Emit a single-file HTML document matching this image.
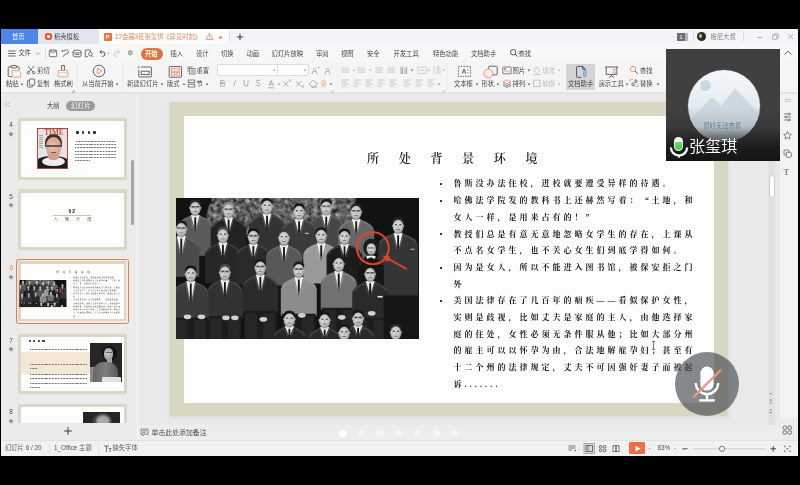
<!DOCTYPE html>
<html lang="zh-CN">
<head>
<meta charset="utf-8">
<title>WPS 演示</title>
<style>
*{box-sizing:border-box;margin:0;padding:0}
html,body{width:800px;height:485px;overflow:hidden;background:#000}
body{font-family:"Liberation Sans","Noto Sans CJK SC",sans-serif;font-size:7px;color:#3c3c3c;position:relative}
.a{position:absolute}
.t{position:absolute;white-space:nowrap;line-height:10px;height:10px;font-size:6.3px;color:#333;font-weight:350}
#win{left:1px;top:28.6px;width:797px;height:427.6px;background:#ececec;overflow:hidden}
/* coordinates inside #win are screen coords minus (1,29); use wrapper shifting */
#w{position:absolute;left:-1px;top:-28.6px;width:800px;height:485px;filter:blur(0.35px);will-change:transform}
.kai{font-family:"Liberation Serif","Noto Serif CJK SC",serif;font-weight:700;color:#1c1c1c}
.bl{position:absolute;left:269px;white-space:nowrap;font-size:8px;letter-spacing:3px;line-height:12px;height:12px;font-weight:700;color:#1a1a1a}
.q{display:inline-block;width:11px;letter-spacing:0}
.dot{position:absolute;left:255.7px;width:2.2px;height:2.2px;border-radius:0.4px;background:#1a1a1a}
.pd{position:absolute;top:429.5px;width:7.5px;height:7.5px;border-radius:50%;background:#f5f5f5}
</style>
</head>
<body>
<div id="win" class="a"><div id="w">

<!-- ===== tab bar ===== -->
<div class="a" style="left:1px;top:29px;width:797px;height:15px;background:#f3f4f7"></div>
<div class="a" style="left:1px;top:29px;width:37px;height:15px;background:#4d86ea"></div>
<div class="t" style="left:12px;top:31.5px;color:#fff">首页</div>
<div class="a" style="left:38px;top:29px;width:61px;height:15px;background:#e2e6ee"></div>
<div class="a" style="left:44.5px;top:32.5px;width:7.5px;height:7.5px;border-radius:2px;background:#ee5a2c"></div>
<div class="a" style="left:46.5px;top:34.5px;width:3.5px;height:3.5px;border-radius:50%;background:#fff"></div>
<div class="t" style="left:54px;top:31.5px;color:#333">稻壳模板</div>
<div class="a" style="left:99px;top:29px;width:131px;height:15px;background:#fcfcfd"></div>
<div class="a" style="left:104px;top:32.5px;width:8px;height:8px;border-radius:1px;background:#ee7337"></div>
<div class="t" style="left:105.5px;top:31.5px;color:#fff;font-size:6px;font-weight:700">P</div>
<div class="t" style="left:115px;top:31.5px;color:#e38450">17会展3班张玺琪《异见时刻》</div>
<svg class="a" style="left:205px;top:32px" width="9" height="9" viewBox="0 0 9 9"><path d="M4.5 1.2 L8 7.6 L1 7.6 Z" fill="none" stroke="#dc7a78" stroke-width="0.75"/><path d="M4.5 3.6 V5.6 M4.5 6.2 V6.9" stroke="#dc7a78" stroke-width="0.7"/></svg>
<div class="a" style="left:219px;top:35.5px;width:3px;height:3px;border-radius:50%;background:#f08a3c"></div>
<div class="a" style="left:228.5px;top:31px;width:1px;height:11px;background:#dcdde0"></div>
<svg class="a" style="left:236px;top:33px" width="8" height="8" viewBox="0 0 8 8"><path d="M4 0.8 V7.2 M0.8 4 H7.2" stroke="#444" stroke-width="1.1"/></svg>
<!-- right of tab bar -->
<div class="a" style="left:677px;top:33px;width:8px;height:8px;background:#6e6e6e"></div>
<div class="a" style="left:685px;top:33px;width:3px;height:8px;background:#b5b5b5"></div>
<div class="t" style="left:679.3px;top:32px;color:#fff;font-size:6px">1</div>
<div class="a" style="left:692.5px;top:31px;width:1px;height:10px;background:#dddddf"></div>
<div class="a" style="left:697px;top:32px;width:9px;height:9px;border-radius:50%;background:#2a2a22"></div>
<div class="a" style="left:699px;top:34px;width:3px;height:4px;border-radius:50%;background:#c8c0a0"></div>
<div class="t" style="left:710.5px;top:32px;color:#777;font-size:6.3px">维尼大叔</div>
<div class="a" style="left:743px;top:31px;width:1px;height:10px;background:#dddddf"></div>
<svg class="a" style="left:755px;top:31px" width="40" height="11" viewBox="0 0 40 11"><path d="M2.3 6.5 H7" stroke="#999" stroke-width="0.8"/><path d="M17.5 4.2 h4.3 v4 h-4.3 z M19 4.2 v-1.4 h4.3 v4 h-1.5" fill="none" stroke="#999" stroke-width="0.7"/><path d="M33.2 3.2 L38 8 M38 3.2 L33.2 8" stroke="#999" stroke-width="0.8"/></svg>

<!-- ===== menu row ===== -->
<div class="a" style="left:1px;top:44px;width:797px;height:17px;background:#f7f7f8"></div>
<svg class="a" style="left:7px;top:48.8px" width="40" height="9" viewBox="0 0 40 9"><path d="M1.2 2 H8.6 M1.2 4.5 H8.6 M1.2 7 H8.6" stroke="#444" stroke-width="0.8"/><path d="M28.8 3.5 L30.8 5.5 L32.8 3.5" fill="none" stroke="#777" stroke-width="0.7"/></svg>
<div class="t" style="left:18.5px;top:48.4px;color:#333">文件</div>
<div class="a" style="left:44.5px;top:46.5px;width:1px;height:12px;background:#dcdcdc"></div>
<!-- quick icons -->
<svg class="a" style="left:48px;top:48.2px" width="92" height="11" viewBox="0 0 92 11" fill="none" stroke="#505050" stroke-width="0.8">
<rect x="1.3" y="2" width="7.4" height="6.7" rx="1"/><path d="M2.8 2.2 v1.9 h4.4 V2.2"/>
<path d="M16.2 3.6 a2.1 2.1 0 1 1 2.6 2.3 l-1.6 0.2 M17.4 6 l-2.6 2.9 M14.6 2 v2 M13.6 3 h2" />
<rect x="25" y="2.2" width="8.2" height="6.6" rx="2.2"/><path d="M25 4.9 h8.2 M27 6.6 h4.2"/>
<path d="M42.3 4 V2 h-5 v6.7 h2.8" /><circle cx="42.4" cy="6.2" r="1.8"/><path d="M43.8 7.6 l1.4 1.4"/>
<path d="M52.2 3.9 h2.6 a2.2 2.2 0 0 1 0 4.4 h-1" stroke="#444" stroke-width="0.9"/><path d="M53.6 2.2 l-1.8 1.7 l1.8 1.7" stroke="#444" stroke-width="0.9"/>
<path d="M59.5 4.8 l1 1.2 l1 -1.2 z" fill="#777" stroke="none"/>
<path d="M71 3.9 h-2.6 a2.2 2.2 0 0 0 0 4.4 h1" stroke="#c4c4c4" stroke-width="0.9"/><path d="M69.6 2.2 l1.8 1.7 l-1.8 1.7" stroke="#c4c4c4" stroke-width="0.9"/>
<path d="M80.2 3.2 h4.2" stroke="#555"/><path d="M80.2 5 l2.1 2.3 l2.1 -2.3 z" stroke="#555" stroke-width="0.7"/>
</svg>
<div class="a" style="left:140.5px;top:47.5px;width:22.5px;height:12px;border-radius:6px;background:#e2733d"></div>
<div class="t" style="left:145px;top:48.9px;color:#fff;font-weight:700">开始</div>
<div class="t" style="left:170.5px;top:48.9px">插入</div>
<div class="t" style="left:196px;top:48.9px">设计</div>
<div class="t" style="left:221px;top:48.9px">切换</div>
<div class="t" style="left:246.5px;top:48.9px">动画</div>
<div class="t" style="left:271.5px;top:48.9px">幻灯片放映</div>
<div class="t" style="left:316px;top:48.9px">审阅</div>
<div class="t" style="left:341px;top:48.9px">视图</div>
<div class="t" style="left:367px;top:48.9px">安全</div>
<div class="t" style="left:393.5px;top:48.9px">开发工具</div>
<div class="t" style="left:433px;top:48.9px">特色功能</div>
<div class="t" style="left:471px;top:48.9px">文档助手</div>
<svg class="a" style="left:509px;top:48px" width="10" height="10" viewBox="0 0 10 10"><circle cx="4.2" cy="4.2" r="2.7" fill="none" stroke="#444" stroke-width="0.9"/><path d="M6.2 6.2 L8.6 8.6" stroke="#444" stroke-width="1"/></svg>
<div class="t" style="left:518.5px;top:48.9px">查找</div>
<svg class="a" style="left:783px;top:49px" width="10" height="8" viewBox="0 0 10 8"><path d="M1.5 5.5 L5 2.2 L8.5 5.5" fill="none" stroke="#555" stroke-width="0.9"/></svg>

<!-- ===== ribbon ===== -->
<div class="a" style="left:1px;top:61px;width:797px;height:32px;background:#f5f5f6"></div>
<div class="a" style="left:1px;top:92px;width:797px;height:1.5px;background:#e4e4e6"></div>
<svg class="a" style="left:7px;top:64px" width="16" height="15" viewBox="0 0 16 15" fill="none" stroke="#555" stroke-width="0.9"><path d="M4 2.8 H2.2 a1 1 0 0 0 -1 1 V11.5 a1 1 0 0 0 1 1 H5"/><path d="M9.5 2.8 h1.6 a1 1 0 0 1 1 1 V6"/><rect x="4" y="1.5" width="5.5" height="2.4" rx="0.6"/><path d="M5.2 6.6 h6.2 l2.2 2 v4.5 h-8.4 z" stroke="#e9a27d" fill="#fdf3ec"/></svg>
<div class="t" style="left:6px;top:78.5px;">粘贴</div>
<svg class="a" style="left:20px;top:82.5px" width="4" height="3" viewBox="0 0 4 3"><path d="M0.6 0.6 L2 2.4 L3.4 0.6 Z" fill="#666"/></svg>
<svg class="a" style="left:26px;top:65px" width="10" height="10" viewBox="0 0 10 10" fill="none" stroke="#555" stroke-width="0.8"><path d="M2 1 L7 7 M8 1 L3 7"/><circle cx="2.3" cy="7.7" r="1.2"/><circle cx="7.7" cy="7.7" r="1.2"/></svg>
<div class="t" style="left:37px;top:65.5px;">剪切</div>
<svg class="a" style="left:26px;top:78px" width="10" height="10" viewBox="0 0 10 10" fill="none" stroke="#555" stroke-width="0.8"><rect x="3.4" y="1" width="5.2" height="6.2" rx="0.6"/><path d="M3.4 2.6 H2 a0.6 0.6 0 0 0 -0.6 0.6 V8.4 a0.6 0.6 0 0 0 0.6 0.6 H6 a0.6 0.6 0 0 0 0.6 -0.6 V7.2"/></svg>
<div class="t" style="left:37px;top:78.5px;">复制</div>
<svg class="a" style="left:56px;top:64px" width="14" height="15" viewBox="0 0 14 15" fill="none" stroke="#555" stroke-width="0.9"><path d="M5.6 1.5 h2.8 v5 h-2.8 z"/><path d="M2.2 6.5 h9.6 v2.6 h-9.6 z" stroke="#e9a27d"/><path d="M2.2 9.1 v3.8 h9.6 v-3.8" stroke="#e9a27d" fill="#fdf3ec"/></svg>
<div class="t" style="left:54px;top:78.5px;">格式刷</div>
<div class="a" style="left:76.5px;top:63px;width:1px;height:27px;background:#ebebec"></div>
<svg class="a" style="left:71px;top:88.5px" width="4" height="4" viewBox="0 0 4 4"><path d="M3.2 0.8 V3.2 H0.8" fill="none" stroke="#888" stroke-width="0.7"/></svg>
<svg class="a" style="left:92px;top:64px" width="14" height="14" viewBox="0 0 14 14" fill="none"><circle cx="7" cy="7" r="5.8" stroke="#555" stroke-width="0.9"/><path d="M5.4 4.2 L9.8 7 L5.4 9.8 Z" stroke="#e8906a" stroke-width="0.9" stroke-linejoin="round"/></svg>
<div class="t" style="left:82px;top:78.5px;">从当前开始</div>
<svg class="a" style="left:114.5px;top:82.5px" width="4" height="3" viewBox="0 0 4 3"><path d="M0.6 0.6 L2 2.4 L3.4 0.6 Z" fill="#666"/></svg>
<div class="a" style="left:122px;top:63px;width:1px;height:27px;background:#ededee"></div>
<svg class="a" style="left:137px;top:64.5px" width="16" height="14" viewBox="0 0 16 14" fill="none" stroke="#555" stroke-width="0.9"><path d="M4 2 H13.6 a0.8 0.8 0 0 1 0.8 0.8 V11.2 a0.8 0.8 0 0 1 -0.8 0.8 H2.6 a0.8 0.8 0 0 1 -0.8 -0.8 V5"/><rect x="4.2" y="6.2" width="8" height="3.4"/><path d="M1.8 0.6 V3.8 M0.2 2.2 H3.4" stroke="#e8906a"/></svg>
<div class="t" style="left:127px;top:78.5px;">新建幻灯片</div>
<svg class="a" style="left:159.5px;top:82.5px" width="4" height="3" viewBox="0 0 4 3"><path d="M0.6 0.6 L2 2.4 L3.4 0.6 Z" fill="#666"/></svg>
<svg class="a" style="left:168px;top:64.5px" width="15" height="14" viewBox="0 0 15 14" fill="none" stroke="#555" stroke-width="0.9"><rect x="1.2" y="1.6" width="12.4" height="10.6" rx="0.6"/><rect x="3.4" y="3.8" width="8" height="2.4" stroke="#e8906a"/><rect x="3.4" y="7.6" width="3.2" height="2.6" stroke="#e8906a"/><rect x="8.2" y="7.6" width="3.2" height="2.6" stroke="#e8906a"/></svg>
<div class="t" style="left:167px;top:78.5px;">版式</div>
<svg class="a" style="left:181.5px;top:82.5px" width="4" height="3" viewBox="0 0 4 3"><path d="M0.6 0.6 L2 2.4 L3.4 0.6 Z" fill="#666"/></svg>
<svg class="a" style="left:187px;top:65.5px" width="9" height="9" viewBox="0 0 9 9" fill="none" stroke="#666" stroke-width="0.8"><rect x="2.6" y="2.4" width="5.4" height="5.6"/><path d="M1 5.8 V1 H5.6"/><path d="M4 4.4 h2.6 M4 6 h2.6"/></svg>
<div class="t" style="left:196.5px;top:65.5px;">重置</div>
<svg class="a" style="left:187px;top:78.5px" width="9" height="9" viewBox="0 0 9 9" fill="none" stroke="#666" stroke-width="0.8"><rect x="1.2" y="1" width="6.6" height="2.6"/><rect x="1.2" y="5.2" width="6.6" height="2.8"/></svg>
<div class="t" style="left:196.5px;top:78.5px;">节</div>
<svg class="a" style="left:204.5px;top:82.5px" width="4" height="3" viewBox="0 0 4 3"><path d="M0.6 0.6 L2 2.4 L3.4 0.6 Z" fill="#666"/></svg>
<div class="a" style="left:217px;top:64.4px;width:91.5px;height:11.2px;background:#fff;border:0.8px solid #dcdcdc;border-radius:2px"></div>
<div class="a" style="left:276.5px;top:64.4px;width:0.8px;height:11.2px;background:#dcdcdc"></div>
<svg class="a" style="left:271.5px;top:69.3px" width="4" height="3" viewBox="0 0 4 3"><path d="M0.6 0.6 L2 2.4 L3.4 0.6 Z" fill="#aaa"/></svg>
<svg class="a" style="left:303px;top:69.3px" width="4" height="3" viewBox="0 0 4 3"><path d="M0.6 0.6 L2 2.4 L3.4 0.6 Z" fill="#aaa"/></svg>
<div class="t" style="left:311.5px;top:64.5px;font-size:9px;color:#9a9a9a;height:12px;line-height:12px">A</div><div class="t" style="left:317.5px;top:63px;font-size:4.5px;color:#9a9a9a">+</div>
<div class="t" style="left:324.5px;top:64.5px;font-size:9px;color:#9a9a9a;height:12px;line-height:12px">A</div><div class="t" style="left:330.5px;top:63px;font-size:4.5px;color:#9a9a9a">-</div>
<svg class="a" style="left:217px;top:77.5px" width="118" height="11" viewBox="0 0 118 11" fill="none" stroke="#9a9a9a" stroke-width="0.8"><path d="M3.6 2.4 h2.4 a1.4 1.4 0 0 1 0 2.8 h-2.4 z M3.6 5.2 h2.8 a1.5 1.5 0 0 1 0 3 h-2.8 z"/><path d="M18.6 2.4 L16.6 8.2"/><path d="M27 2.4 V6 a2 2 0 0 0 4 0 V2.4"/><path d="M43 3.2 a1.8 1.2 0 0 0 -3.6 0.4 c0 1.6 3.8 1 3.8 2.8 a1.9 1.3 0 0 1 -4 0.2"/><path d="M52 8 L54.2 2.6 L56.4 8 M52.8 6.2 h2.8 M51.4 9.8 h5.8"/><path d="M66.4 3.2 L71.6 8.4 M71.6 3.2 L66.4 8.4"/><path d="M72.6 1.6 h1.2 v1.4 h-1.2 h1.4" stroke-width="0.5"/><path d="M79 3.2 L84.2 8.4 M84.2 3.2 L79 8.4"/><path d="M85.2 7.6 h1.2 v1.4 h-1.2 h1.4" stroke-width="0.5"/><path d="M92.4 5.8 L96 2.2 L100.4 5.8 L96.8 9 h-1.6 z M94.4 9 H100" /></svg>
<svg class="a" style="left:276.5px;top:82.5px" width="4" height="3" viewBox="0 0 4 3"><path d="M0.6 0.6 L2 2.4 L3.4 0.6 Z" fill="#aaa"/></svg>
<div class="t" style="left:320.5px;top:78.5px;color:#e59a63;">变</div>
<svg class="a" style="left:328.5px;top:82.5px" width="4" height="3" viewBox="0 0 4 3"><path d="M0.6 0.6 L2 2.4 L3.4 0.6 Z" fill="#888"/></svg>
<svg class="a" style="left:330px;top:88.5px" width="4" height="4" viewBox="0 0 4 4"><path d="M3.2 0.8 V3.2 H0.8" fill="none" stroke="#bbb" stroke-width="0.7"/></svg>
<div class="a" style="left:336.5px;top:63px;width:1px;height:27px;background:#ededee"></div>
<svg class="a" style="left:341px;top:66.5px" width="9" height="9" viewBox="0 0 9 9"><path d="M0.5 1.0 h7.5 M0.5 3.1 h7.5 M0.5 5.2 h7.5 " stroke="#c2c2c2" stroke-width="0.8" fill="none"/></svg>
<svg class="a" style="left:357px;top:66.5px" width="9" height="9" viewBox="0 0 9 9"><path d="M0.5 1.0 h7.5 M0.5 3.1 h7.5 M0.5 5.2 h7.5 " stroke="#c2c2c2" stroke-width="0.8" fill="none"/></svg>
<svg class="a" style="left:374.5px;top:66.5px" width="9" height="9" viewBox="0 0 9 9"><path d="M0.5 1.0 h7.5 M0.5 3.1 h7.5 M0.5 5.2 h7.5 " stroke="#c2c2c2" stroke-width="0.8" fill="none"/></svg>
<svg class="a" style="left:387px;top:66.5px" width="9" height="9" viewBox="0 0 9 9"><path d="M0.5 1.0 h7.5 M0.5 3.1 h7.5 M0.5 5.2 h7.5 " stroke="#c2c2c2" stroke-width="0.8" fill="none"/></svg>
<svg class="a" style="left:351.5px;top:69.3px" width="4" height="3" viewBox="0 0 4 3"><path d="M0.6 0.6 L2 2.4 L3.4 0.6 Z" fill="#bbb"/></svg>
<svg class="a" style="left:367.5px;top:69.3px" width="4" height="3" viewBox="0 0 4 3"><path d="M0.6 0.6 L2 2.4 L3.4 0.6 Z" fill="#bbb"/></svg>
<svg class="a" style="left:341px;top:79px" width="9" height="9" viewBox="0 0 9 9"><path d="M0.5 1.0 h7.5 M0.5 3.1 h5 M0.5 5.2 h7.5 M0.5 7.3 h5 " stroke="#c2c2c2" stroke-width="0.8" fill="none"/></svg>
<svg class="a" style="left:353px;top:79px" width="9" height="9" viewBox="0 0 9 9"><path d="M0.5 1.0 h7.5 M0.5 3.1 h5 M0.5 5.2 h7.5 M0.5 7.3 h5 " stroke="#c2c2c2" stroke-width="0.8" fill="none"/></svg>
<svg class="a" style="left:365px;top:79px" width="9" height="9" viewBox="0 0 9 9"><path d="M0.5 1.0 h7.5 M0.5 3.1 h5 M0.5 5.2 h7.5 M0.5 7.3 h5 " stroke="#c2c2c2" stroke-width="0.8" fill="none"/></svg>
<svg class="a" style="left:377px;top:79px" width="9" height="9" viewBox="0 0 9 9"><path d="M0.5 1.0 h7.5 M0.5 3.1 h5 M0.5 5.2 h7.5 M0.5 7.3 h5 " stroke="#c2c2c2" stroke-width="0.8" fill="none"/></svg>
<svg class="a" style="left:389px;top:79px" width="9" height="9" viewBox="0 0 9 9"><path d="M0.5 1.0 h7.5 M0.5 3.1 h5 M0.5 5.2 h7.5 M0.5 7.3 h5 " stroke="#c2c2c2" stroke-width="0.8" fill="none"/></svg>
<svg class="a" style="left:400.4px;top:65.5px" width="9" height="9" viewBox="0 0 9 9"><path d="M1 0.8 V8 M2.6 0.8 V8 M5 2 V8 M6.6 0.8 V8" stroke="#9c9c9c" stroke-width="0.9" fill="none"/></svg>
<svg class="a" style="left:416.6px;top:65.5px" width="10" height="9" viewBox="0 0 10 9"><rect x="0.8" y="1" width="8.4" height="6.6" fill="none" stroke="#c4c4c4" stroke-width="0.7"/><path d="M2.6 4.3 h4.8" stroke="#c4c4c4" stroke-width="0.8"/></svg>
<svg class="a" style="left:432.6px;top:65px" width="9" height="10" viewBox="0 0 9 10"><path d="M1 0.8 V9 M3 6 h5 M3 8 h5 M5.4 1 l-1.6 3 h3.2 z" stroke="#c0c0c0" stroke-width="0.7" fill="none"/></svg>
<svg class="a" style="left:410px;top:69.3px" width="4" height="3" viewBox="0 0 4 3"><path d="M0.6 0.6 L2 2.4 L3.4 0.6 Z" fill="#777"/></svg>
<svg class="a" style="left:427px;top:69.3px" width="4" height="3" viewBox="0 0 4 3"><path d="M0.6 0.6 L2 2.4 L3.4 0.6 Z" fill="#bbb"/></svg>
<svg class="a" style="left:442px;top:69.3px" width="4" height="3" viewBox="0 0 4 3"><path d="M0.6 0.6 L2 2.4 L3.4 0.6 Z" fill="#bbb"/></svg>
<svg class="a" style="left:403px;top:79px" width="9" height="9" viewBox="0 0 9 9"><path d="M0.5 1.0 h7.5 M0.5 3.1 h5 M0.5 5.2 h7.5 M0.5 7.3 h5 " stroke="#c2c2c2" stroke-width="0.8" fill="none"/></svg>
<svg class="a" style="left:415px;top:79px" width="9" height="9" viewBox="0 0 9 9"><path d="M0.5 1.0 h7.5 M0.5 3.1 h5 M0.5 5.2 h7.5 M0.5 7.3 h5 " stroke="#c2c2c2" stroke-width="0.8" fill="none"/></svg>
<svg class="a" style="left:427px;top:79px" width="9" height="9" viewBox="0 0 9 9"><path d="M0.5 1.0 h7.5 M0.5 3.1 h5 M0.5 5.2 h7.5 M0.5 7.3 h5 " stroke="#c2c2c2" stroke-width="0.8" fill="none"/></svg>
<svg class="a" style="left:437px;top:82.5px" width="4" height="3" viewBox="0 0 4 3"><path d="M0.6 0.6 L2 2.4 L3.4 0.6 Z" fill="#999"/></svg>
<div class="a" style="left:447px;top:63px;width:1px;height:27px;background:#ededee"></div>
<svg class="a" style="left:441px;top:88.5px" width="4" height="4" viewBox="0 0 4 4"><path d="M3.2 0.8 V3.2 H0.8" fill="none" stroke="#bbb" stroke-width="0.7"/></svg>
<svg class="a" style="left:457px;top:65px" width="15" height="13" viewBox="0 0 15 13" fill="none" stroke="#555" stroke-width="0.8"><rect x="1.4" y="1.4" width="12.2" height="10" stroke-dasharray="1.6 1"/><path d="M5.2 8.6 L7 4 L8.8 8.6 M5.8 7 h2.4"/><path d="M10 5 h1.6 M10 7.6 h1.6" stroke-width="0.6"/></svg>
<div class="t" style="left:454px;top:78.5px;">文本框</div>
<svg class="a" style="left:474.5px;top:82.5px" width="4" height="3" viewBox="0 0 4 3"><path d="M0.6 0.6 L2 2.4 L3.4 0.6 Z" fill="#666"/></svg>
<svg class="a" style="left:482px;top:64.5px" width="16" height="14" viewBox="0 0 16 14" fill="none" stroke-width="0.9"><rect x="6.6" y="1.2" width="8.6" height="8.6" rx="1" stroke="#555"/><circle cx="6.4" cy="8.4" r="4.4" stroke="#e8906a" fill="#fbeee6"/></svg>
<div class="t" style="left:481.5px;top:78.5px;">形状</div>
<svg class="a" style="left:496px;top:82.5px" width="4" height="3" viewBox="0 0 4 3"><path d="M0.6 0.6 L2 2.4 L3.4 0.6 Z" fill="#666"/></svg>
<svg class="a" style="left:502px;top:65.5px" width="10" height="9" viewBox="0 0 10 9" fill="none" stroke="#666" stroke-width="0.8"><rect x="0.8" y="1" width="8.4" height="6.8" rx="0.6"/><path d="M1.6 6.6 L3.8 4.4 L5.4 5.8 L6.6 4.8 L8.6 6.6" stroke="#e8906a"/><circle cx="3" cy="3" r="0.6"/></svg>
<div class="t" style="left:512.5px;top:65.5px;">图片</div>
<svg class="a" style="left:527px;top:69.3px" width="4" height="3" viewBox="0 0 4 3"><path d="M0.6 0.6 L2 2.4 L3.4 0.6 Z" fill="#666"/></svg>
<svg class="a" style="left:502px;top:78.5px" width="10" height="9" viewBox="0 0 10 9" fill="none" stroke="#666" stroke-width="0.8"><path d="M5 0.8 L9 2.8 L5 4.8 L1 2.8 Z" stroke="#e8906a"/><path d="M1 4.6 L5 6.6 L9 4.6 M1 6.4 L5 8.4 L9 6.4"/></svg>
<div class="t" style="left:512.5px;top:78.5px;">排列</div>
<svg class="a" style="left:527px;top:82.5px" width="4" height="3" viewBox="0 0 4 3"><path d="M0.6 0.6 L2 2.4 L3.4 0.6 Z" fill="#666"/></svg>
<svg class="a" style="left:532px;top:65.5px" width="10" height="9" viewBox="0 0 10 9" fill="none" stroke="#bdbdbd" stroke-width="0.8"><path d="M4.6 1 L8.2 4.4 L5 7.4 L1.6 4.4 Z M1 8.4 h8"/></svg>
<div class="t" style="left:542.5px;top:65.5px;color:#b4b4b4;">填充</div>
<svg class="a" style="left:557px;top:69.3px" width="4" height="3" viewBox="0 0 4 3"><path d="M0.6 0.6 L2 2.4 L3.4 0.6 Z" fill="#bbb"/></svg>
<svg class="a" style="left:532px;top:78.5px" width="10" height="9" viewBox="0 0 10 9" fill="none" stroke="#bdbdbd" stroke-width="0.9"><rect x="1.6" y="1.2" width="6.4" height="6.4"/></svg>
<div class="t" style="left:542.5px;top:78.5px;color:#b4b4b4;">轮廓</div>
<svg class="a" style="left:557px;top:82.5px" width="4" height="3" viewBox="0 0 4 3"><path d="M0.6 0.6 L2 2.4 L3.4 0.6 Z" fill="#bbb"/></svg>
<div class="a" style="left:562px;top:63px;width:1px;height:27px;background:#ededee"></div>
<div class="a" style="left:566px;top:64px;width:29px;height:25.5px;border-radius:1.5px;background:#d4d4d5"></div>
<svg class="a" style="left:574px;top:64.5px" width="14" height="14" viewBox="0 0 14 14" fill="none" stroke="#444" stroke-width="0.9"><path d="M8.6 1.4 H3.4 a0.8 0.8 0 0 0 -0.8 0.8 V11.6 a0.8 0.8 0 0 0 0.8 0.8 H7.4 M8.6 1.4 L11.2 4 V6 M8.6 1.4 V4 H11.2"/><path d="M9.6 6.4 a1.3 1.3 0 0 1 2.6 0 V10.4 a1.3 1.3 0 0 1 -2.6 0 Z" stroke="#6f9bd8" fill="#9fc0ee"/></svg>
<div class="t" style="left:568px;top:78.5px;color:#333;">文档助手</div>
<svg class="a" style="left:604px;top:64.5px" width="15" height="14" viewBox="0 0 15 14" fill="none" stroke="#555" stroke-width="0.9"><path d="M1 2 H14 M2.2 2 V9.4 H12.8 V2 M7.5 9.4 V11 M5 12.6 L7.5 10.8 L10 12.6"/><rect x="9.6" y="4.4" width="2.4" height="3.6" stroke="#e8906a" stroke-width="0.7"/></svg>
<div class="t" style="left:598.5px;top:78.5px;">演示工具</div>
<svg class="a" style="left:625px;top:82.5px" width="4" height="3" viewBox="0 0 4 3"><path d="M0.6 0.6 L2 2.4 L3.4 0.6 Z" fill="#666"/></svg>
<svg class="a" style="left:629px;top:65px" width="10" height="10" viewBox="0 0 10 10" fill="none"><circle cx="4" cy="4" r="2.7" stroke="#e8906a" stroke-width="0.9"/><path d="M6 6 L8.8 8.8" stroke="#666" stroke-width="1"/></svg>
<div class="t" style="left:640px;top:65.5px;">查找</div>
<svg class="a" style="left:629px;top:78px" width="10" height="10" viewBox="0 0 10 10" fill="none" stroke="#666" stroke-width="0.8"><path d="M1 4 V1.6 H4.4" stroke="#e8906a"/><path d="M9 6 V8.6 H5.6" stroke="#e8906a"/><path d="M3 5 h2.2 v2.6 h-2.2 z M6 2 h2 v2.4 h-2 z"/></svg>
<div class="t" style="left:640px;top:78.5px;">替换</div>
<svg class="a" style="left:655.5px;top:82.5px" width="4" height="3" viewBox="0 0 4 3"><path d="M0.6 0.6 L2 2.4 L3.4 0.6 Z" fill="#666"/></svg>

<!-- ===== left panel ===== -->
<div class="a" style="left:1px;top:94px;width:136px;height:347px;background:#ebebeb"></div>
<div class="a" style="left:136.5px;top:94px;width:1px;height:347px;background:#f6f6f6"></div>
<div class="a" style="left:137.5px;top:94px;width:643px;height:331px;background:#e9e9e9"></div>
<svg class="a" style="left:4px;top:101px" width="7" height="7" viewBox="0 0 7 7"><path d="M3 1 L1 3.5 L3 6 M5.6 1 L3.6 3.5 L5.6 6" fill="none" stroke="#aaa" stroke-width="0.7"/></svg>
<div class="t" style="left:47px;top:100.5px;color:#333">大纲</div>
<div class="a" style="left:66px;top:100.5px;width:29px;height:10px;border-radius:5px;background:#9b9b9b"></div>
<div class="t" style="left:71px;top:100.5px;color:#fff;letter-spacing:0.3px">幻灯片</div>
<div class="t" style="left:9.3px;top:120px;color:#4a4a4a;font-weight:500;font-size:6.4px">4</div>
<svg class="a" style="left:8px;top:131px" width="6" height="6" viewBox="0 0 6 6"><path d="M3 0.4 l0.8 1.7 l1.8 0.2 l-1.3 1.3 l0.3 1.9 l-1.6 -0.9 l-1.6 0.9 l0.3 -1.9 l-1.3 -1.3 l1.8 -0.2 z" fill="#8a8a8a"/></svg>
<div class="a" style="left:17.5px;top:117.5px;width:109.5px;height:62.5px;background:#d9d8c4"></div>
<div class="a" style="left:21px;top:121px;width:103px;height:56px;background:#fdfdfb"></div>
<div class="a" style="left:36.9px;top:128px;width:31.2px;height:40.8px;background:#b5443a"></div>
<div class="a" style="left:38px;top:129.1px;width:29px;height:38.6px;background:#e6e4e2;overflow:hidden"><div class="a" style="left:0;top:0;width:29px;height:38.6px;filter:blur(0.6px)"><div class="a" style="left:-2px;top:27px;width:33px;height:14px;border-radius:45% 45% 0 0;background:#1d1d24"></div><div class="a" style="left:6.6px;top:4.5px;width:17.4px;height:17px;border-radius:50% 50% 42% 42%;background:#4a2c26"></div><div class="a" style="left:7.6px;top:8.2px;width:15.6px;height:20.5px;border-radius:46% 46% 50% 50%;background:radial-gradient(circle at 45% 45%,#e8c4b2,#cf9f8b 70%,#a87666)"></div><div class="a" style="left:7.2px;top:15.6px;width:16.4px;height:2.1px;border-radius:1px;background:#2c1f1f;opacity:0.65"></div><div class="a" style="left:12.6px;top:23px;width:5.6px;height:1.2px;background:#9a4a40"></div><div class="a" style="left:3.5px;top:27.5px;width:23px;height:9.5px;border-radius:50%;background:#efeeec"></div><div class="a" style="left:9.5px;top:25px;width:11.5px;height:6px;border-radius:0 0 50% 50%;background:#cfa08d"></div><div class="a" style="left:1px;top:6px;width:4px;height:14px;background:repeating-linear-gradient(#777 0 0.7px,transparent 0.7px 2px);opacity:0.6"></div></div><div class="a" style="left:6.2px;top:-0.6px;font-family:'Liberation Serif',serif;font-weight:700;font-size:7.2px;line-height:8px;letter-spacing:0.1px;color:#c0392b;opacity:0.85">TIME</div></div>
<div class="a" style="left:76.2px;top:131.4px;width:2.4px;height:2.4px;border-radius:0.8px;background:#333"></div>
<div class="a" style="left:81.9px;top:131.4px;width:2.4px;height:2.4px;border-radius:0.8px;background:#333"></div>
<div class="a" style="left:87.6px;top:131.4px;width:2.4px;height:2.4px;border-radius:0.8px;background:#333"></div>
<div class="a" style="left:93.3px;top:131.4px;width:2.4px;height:2.4px;border-radius:0.8px;background:#333"></div>
<div class="a" style="left:76px;top:141.00px;width:40.0px;height:0.9px;background:repeating-linear-gradient(90deg,#777 0 1.1px,#c4c4c4 1.1px 1.7px,#949494 1.7px 2.6px,#d0d0d0 2.6px 3.1px)"></div>
<div class="a" style="left:74.5px;top:144.22px;width:41.5px;height:0.9px;background:repeating-linear-gradient(90deg,#777 0 1.1px,#c4c4c4 1.1px 1.7px,#949494 1.7px 2.6px,#d0d0d0 2.6px 3.1px)"></div>
<div class="a" style="left:74.5px;top:147.44px;width:41.5px;height:0.9px;background:repeating-linear-gradient(90deg,#777 0 1.1px,#c4c4c4 1.1px 1.7px,#949494 1.7px 2.6px,#d0d0d0 2.6px 3.1px)"></div>
<div class="a" style="left:74.5px;top:150.66px;width:41.5px;height:0.9px;background:repeating-linear-gradient(90deg,#777 0 1.1px,#c4c4c4 1.1px 1.7px,#949494 1.7px 2.6px,#d0d0d0 2.6px 3.1px)"></div>
<div class="a" style="left:74.5px;top:153.88px;width:41.5px;height:0.9px;background:repeating-linear-gradient(90deg,#777 0 1.1px,#c4c4c4 1.1px 1.7px,#949494 1.7px 2.6px,#d0d0d0 2.6px 3.1px)"></div>
<div class="a" style="left:74.5px;top:157.10px;width:41.5px;height:0.9px;background:repeating-linear-gradient(90deg,#777 0 1.1px,#c4c4c4 1.1px 1.7px,#949494 1.7px 2.6px,#d0d0d0 2.6px 3.1px)"></div>
<div class="a" style="left:74.5px;top:160.32px;width:15.5px;height:0.9px;background:repeating-linear-gradient(90deg,#777 0 1.1px,#c4c4c4 1.1px 1.7px,#949494 1.7px 2.6px,#d0d0d0 2.6px 3.1px)"></div>
<div class="t" style="left:9.3px;top:191.5px;color:#4a4a4a;font-weight:500;font-size:6.4px">5</div>
<svg class="a" style="left:8px;top:202px" width="6" height="6" viewBox="0 0 6 6"><path d="M3 0.4 l0.8 1.7 l1.8 0.2 l-1.3 1.3 l0.3 1.9 l-1.6 -0.9 l-1.6 0.9 l0.3 -1.9 l-1.3 -1.3 l1.8 -0.2 z" fill="#8a8a8a"/></svg>
<div class="a" style="left:17.5px;top:189px;width:109.5px;height:61px;background:#d9d8c4"></div>
<div class="a" style="left:21px;top:192.5px;width:103px;height:54.5px;background:#fdfdfb"></div>
<div class="t" style="left:68.6px;top:206.8px;color:#111;font-size:4.9px;font-weight:700;letter-spacing:1px">02</div>
<div class="a" style="left:53px;top:215.3px;width:38px;height:0.7px;background:#c9c8b0"></div>
<div class="t" style="left:53.7px;top:214.6px;color:#333;font-size:4px;letter-spacing:7.2px">人物介绍</div>
<div class="t" style="left:9.8px;top:262.6px;color:#e8905a;font-weight:500;font-size:6.4px">6</div>
<svg class="a" style="left:8px;top:274px" width="6" height="6" viewBox="0 0 6 6"><path d="M3 0.4 l0.8 1.7 l1.8 0.2 l-1.3 1.3 l0.3 1.9 l-1.6 -0.9 l-1.6 0.9 l0.3 -1.9 l-1.3 -1.3 l1.8 -0.2 z" fill="#8a8a8a"/></svg>
<div class="a" style="left:16px;top:258.8px;width:112.5px;height:64.8px;border:1.5px solid #ea7a52;border-radius:2.5px;background:#f6e9e2"></div>
<div class="a" style="left:18.3px;top:261px;width:108px;height:60.4px;background:#d9d8c4"></div>
<div class="a" style="left:21px;top:263.7px;width:103px;height:55px;background:#fdfdfb"></div>
<div class="a" style="left:21px;top:263.7px;width:529.5px;height:286.5px;transform:scale(0.1945);transform-origin:0 0"><div class="a" style="left:-8.7px;top:82.2px;width:243.6px;height:141.2px;overflow:hidden"><svg width="243.6" height="141.2" viewBox="176 198 244 142" preserveAspectRatio="none" style="display:block">
<defs><filter id="tb" x="-5%" y="-5%" width="110%" height="110%"><feGaussianBlur stdDeviation="0.55"/></filter><filter id="tb2" x="0" y="0" width="100%" height="100%" color-interpolation-filters="sRGB"><feTurbulence type="fractalNoise" baseFrequency="0.22" numOctaves="2" seed="7" result="n"/><feColorMatrix in="n" type="matrix" values="0.6 0.6 0 0 -0.22  0.6 0.6 0 0 -0.22  0.6 0.6 0 0 -0.22  0 0 0 0 1"/><feComposite in2="SourceGraphic" operator="in"/><feGaussianBlur stdDeviation="0.5"/></filter><radialGradient id="tfg" cx="0.45" cy="0.42" r="0.62"><stop offset="0" stop-color="#e2e2e2"/><stop offset="0.6" stop-color="#c4c4c4"/><stop offset="1" stop-color="#8c8c8c"/></radialGradient><pattern id="tst" width="9" height="8" patternUnits="userSpaceOnUse"><rect width="9" height="8" fill="#5c5c5c"/><circle cx="2.5" cy="2.5" r="2" fill="#8e8e8e"/><circle cx="7" cy="6" r="1.8" fill="#2f2f2f"/><path d="M0 7 Q4 3 9 6" stroke="#a0a0a0" stroke-width="0.9" fill="none"/></pattern></defs>
<rect x="176" y="198" width="244" height="142" fill="#121212"/>
<g filter="url(#tb2)"><path d="M212 198 L356 198 L360 214 L352 232 L212 236 L206 214 Z" fill="#777"/></g>
<g filter="url(#tb)">
<path d="M249.2 254.5 L249.2 225.7 Q250.2 218.7 261.7 214.7 L272.7 214.7 Q284.2 218.7 285.2 225.7 L285.2 254.5 Z" fill="#303030"/>
<path d="M251.2 223.7 Q252.2 219.2 261.2 215.9" stroke="#fff" stroke-opacity="0.10" stroke-width="2" fill="none"/>
<path d="M283.2 223.7 Q282.2 219.2 273.2 215.9" stroke="#fff" stroke-opacity="0.10" stroke-width="2" fill="none"/>
<path d="M262.4 214.7 L267.2 230.7 L272.0 214.7 Z" fill="#000" fill-opacity="0.35"/>
<path d="M262.7 213.5 L271.7 213.5 L268.3 225.7 L266.1 225.7 Z" fill="#f0f0f0"/>
<path d="M262.0 214.1 L266.0 228.2 M272.4 214.1 L268.4 228.2" stroke="#fff" stroke-opacity="0.16" stroke-width="1.3" fill="none"/>
<path d="M266.3 215.9 L268.1 215.9 L268.2 225.7 L266.2 225.7 Z" fill="#151515"/>
<rect x="264.6" y="210.5" width="5.2" height="4.2" fill="#a8a8a8"/>
<ellipse cx="267.2" cy="206.5" rx="6.3" ry="1.9" fill="#a8a8a8"/>
<ellipse cx="267.2" cy="202.2" rx="5.6" ry="4.3" fill="#1c1c1c"/>
<ellipse cx="267.2" cy="207.3" rx="5.4" ry="6.9" fill="url(#tfg)"/>
<ellipse cx="265.1" cy="205.4" rx="1.25" ry="0.75" fill="#2a2a2a" opacity="0.78"/><ellipse cx="269.3" cy="205.4" rx="1.25" ry="0.75" fill="#2a2a2a" opacity="0.78"/>
<rect x="266.7" y="206.1" width="1.2" height="2.6" fill="#9a9a9a" opacity="0.7"/>
<rect x="265.3" y="209.8" width="3.8" height="0.9" fill="#5e5e5e" opacity="0.8"/>
<path d="M308.5 255.5 L308.5 226.7 Q309.5 219.7 321.0 215.7 L332.0 215.7 Q343.5 219.7 344.5 226.7 L344.5 255.5 Z" fill="#474747"/>
<path d="M310.5 224.7 Q311.5 220.2 320.5 216.9" stroke="#fff" stroke-opacity="0.10" stroke-width="2" fill="none"/>
<path d="M342.5 224.7 Q341.5 220.2 332.5 216.9" stroke="#fff" stroke-opacity="0.10" stroke-width="2" fill="none"/>
<path d="M321.7 215.7 L326.5 231.7 L331.3 215.7 Z" fill="#000" fill-opacity="0.35"/>
<path d="M322.0 214.5 L331.0 214.5 L327.6 226.7 L325.4 226.7 Z" fill="#f0f0f0"/>
<path d="M321.3 215.1 L325.3 229.2 M331.7 215.1 L327.7 229.2" stroke="#fff" stroke-opacity="0.16" stroke-width="1.3" fill="none"/>
<path d="M325.6 216.9 L327.4 216.9 L327.5 226.7 L325.5 226.7 Z" fill="#151515"/>
<rect x="323.9" y="211.5" width="5.2" height="4.2" fill="#a8a8a8"/>
<ellipse cx="326.5" cy="207.5" rx="6.3" ry="1.9" fill="#a8a8a8"/>
<ellipse cx="326.5" cy="203.2" rx="5.6" ry="4.3" fill="#1e1e1e"/>
<ellipse cx="326.5" cy="208.3" rx="5.4" ry="6.9" fill="url(#tfg)"/>
<rect x="322.0" y="205.5" width="9" height="1.9" rx="0.7" fill="#333" opacity="0.42"/>
<ellipse cx="324.4" cy="206.4" rx="1.25" ry="0.75" fill="#2a2a2a" opacity="0.78"/><ellipse cx="328.6" cy="206.4" rx="1.25" ry="0.75" fill="#2a2a2a" opacity="0.78"/>
<rect x="326.0" y="207.1" width="1.2" height="2.6" fill="#9a9a9a" opacity="0.7"/>
<rect x="324.6" y="210.8" width="3.8" height="0.9" fill="#5e5e5e" opacity="0.8"/>
<path d="M177.3 256.0 L177.3 227.2 Q178.3 220.2 189.8 216.2 L200.8 216.2 Q212.3 220.2 213.3 227.2 L213.3 256.0 Z" fill="#5a5a5a"/>
<path d="M179.3 225.2 Q180.3 220.7 189.3 217.4" stroke="#fff" stroke-opacity="0.10" stroke-width="2" fill="none"/>
<path d="M211.3 225.2 Q210.3 220.7 201.3 217.4" stroke="#fff" stroke-opacity="0.10" stroke-width="2" fill="none"/>
<path d="M190.5 216.2 L195.3 232.2 L200.1 216.2 Z" fill="#000" fill-opacity="0.35"/>
<path d="M190.8 215.0 L199.8 215.0 L196.4 227.2 L194.2 227.2 Z" fill="#f0f0f0"/>
<path d="M190.1 215.6 L194.1 229.7 M200.5 215.6 L196.5 229.7" stroke="#fff" stroke-opacity="0.16" stroke-width="1.3" fill="none"/>
<path d="M194.4 217.4 L196.2 217.4 L196.3 227.2 L194.3 227.2 Z" fill="#151515"/>
<rect x="192.7" y="212.0" width="5.2" height="4.2" fill="#a8a8a8"/>
<ellipse cx="195.3" cy="208.0" rx="6.3" ry="1.9" fill="#a8a8a8"/>
<ellipse cx="195.3" cy="203.7" rx="5.6" ry="4.3" fill="#2a2a2a"/>
<ellipse cx="195.3" cy="208.8" rx="5.4" ry="6.9" fill="url(#tfg)"/>
<rect x="190.8" y="206.0" width="9" height="1.9" rx="0.7" fill="#333" opacity="0.42"/>
<ellipse cx="193.2" cy="206.9" rx="1.25" ry="0.75" fill="#2a2a2a" opacity="0.78"/><ellipse cx="197.4" cy="206.9" rx="1.25" ry="0.75" fill="#2a2a2a" opacity="0.78"/>
<rect x="194.8" y="207.6" width="1.2" height="2.6" fill="#9a9a9a" opacity="0.7"/>
<rect x="193.4" y="211.3" width="3.8" height="0.9" fill="#5e5e5e" opacity="0.8"/>
<path d="M210.7 258.3 L210.7 229.5 Q211.7 222.5 223.2 218.5 L234.2 218.5 Q245.7 222.5 246.7 229.5 L246.7 258.3 Z" fill="#242424"/>
<path d="M212.7 227.5 Q213.7 223.0 222.7 219.7" stroke="#fff" stroke-opacity="0.10" stroke-width="2" fill="none"/>
<path d="M244.7 227.5 Q243.7 223.0 234.7 219.7" stroke="#fff" stroke-opacity="0.10" stroke-width="2" fill="none"/>
<path d="M223.9 218.5 L228.7 234.5 L233.5 218.5 Z" fill="#000" fill-opacity="0.35"/>
<path d="M224.2 217.3 L233.2 217.3 L229.8 229.5 L227.6 229.5 Z" fill="#f0f0f0"/>
<path d="M223.5 217.9 L227.5 232.0 M233.9 217.9 L229.9 232.0" stroke="#fff" stroke-opacity="0.16" stroke-width="1.3" fill="none"/>
<path d="M227.8 219.7 L229.6 219.7 L229.7 229.5 L227.7 229.5 Z" fill="#151515"/>
<rect x="226.1" y="214.3" width="5.2" height="4.2" fill="#a8a8a8"/>
<ellipse cx="228.7" cy="210.3" rx="6.3" ry="1.9" fill="#a8a8a8"/>
<ellipse cx="228.7" cy="206.0" rx="5.6" ry="4.3" fill="#8a8a8a"/>
<ellipse cx="228.7" cy="211.1" rx="5.4" ry="6.9" fill="url(#tfg)"/>
<rect x="224.2" y="208.3" width="9" height="1.9" rx="0.7" fill="#333" opacity="0.42"/>
<ellipse cx="226.6" cy="209.2" rx="1.25" ry="0.75" fill="#2a2a2a" opacity="0.78"/><ellipse cx="230.8" cy="209.2" rx="1.25" ry="0.75" fill="#2a2a2a" opacity="0.78"/>
<rect x="228.2" y="209.9" width="1.2" height="2.6" fill="#9a9a9a" opacity="0.7"/>
<rect x="226.8" y="213.6" width="3.8" height="0.9" fill="#5e5e5e" opacity="0.8"/>
<path d="M281.3 260.0 L281.3 231.2 Q282.3 224.2 293.8 220.2 L304.8 220.2 Q316.3 224.2 317.3 231.2 L317.3 260.0 Z" fill="#3a3a3a"/>
<path d="M283.3 229.2 Q284.3 224.7 293.3 221.4" stroke="#fff" stroke-opacity="0.10" stroke-width="2" fill="none"/>
<path d="M315.3 229.2 Q314.3 224.7 305.3 221.4" stroke="#fff" stroke-opacity="0.10" stroke-width="2" fill="none"/>
<path d="M294.5 220.2 L299.3 236.2 L304.1 220.2 Z" fill="#000" fill-opacity="0.35"/>
<path d="M294.8 219.0 L303.8 219.0 L300.4 231.2 L298.2 231.2 Z" fill="#f0f0f0"/>
<path d="M294.1 219.6 L298.1 233.7 M304.5 219.6 L300.5 233.7" stroke="#fff" stroke-opacity="0.16" stroke-width="1.3" fill="none"/>
<path d="M298.4 221.4 L300.2 221.4 L300.3 231.2 L298.3 231.2 Z" fill="#151515"/>
<rect x="296.7" y="216.0" width="5.2" height="4.2" fill="#a8a8a8"/>
<ellipse cx="299.3" cy="212.0" rx="6.3" ry="1.9" fill="#a8a8a8"/>
<ellipse cx="299.3" cy="207.7" rx="5.6" ry="4.3" fill="#171717"/>
<ellipse cx="299.3" cy="212.8" rx="5.4" ry="6.9" fill="url(#tfg)"/>
<ellipse cx="297.2" cy="210.9" rx="1.25" ry="0.75" fill="#2a2a2a" opacity="0.78"/><ellipse cx="301.4" cy="210.9" rx="1.25" ry="0.75" fill="#2a2a2a" opacity="0.78"/>
<rect x="298.8" y="211.6" width="1.2" height="2.6" fill="#9a9a9a" opacity="0.7"/>
<rect x="297.4" y="215.3" width="3.8" height="0.9" fill="#5e5e5e" opacity="0.8"/>
<path d="M338.5 260.0 L338.5 231.2 Q339.5 224.2 351.0 220.2 L362.0 220.2 Q373.5 224.2 374.5 231.2 L374.5 260.0 Z" fill="#666"/>
<path d="M340.5 229.2 Q341.5 224.7 350.5 221.4" stroke="#fff" stroke-opacity="0.10" stroke-width="2" fill="none"/>
<path d="M372.5 229.2 Q371.5 224.7 362.5 221.4" stroke="#fff" stroke-opacity="0.10" stroke-width="2" fill="none"/>
<path d="M351.7 220.2 L356.5 236.2 L361.3 220.2 Z" fill="#000" fill-opacity="0.35"/>
<path d="M352.0 219.0 L361.0 219.0 L357.6 231.2 L355.4 231.2 Z" fill="#f0f0f0"/>
<path d="M351.3 219.6 L355.3 233.7 M361.7 219.6 L357.7 233.7" stroke="#fff" stroke-opacity="0.16" stroke-width="1.3" fill="none"/>
<path d="M355.6 221.4 L357.4 221.4 L357.5 231.2 L355.5 231.2 Z" fill="#151515"/>
<rect x="353.9" y="216.0" width="5.2" height="4.2" fill="#a8a8a8"/>
<ellipse cx="356.5" cy="212.0" rx="6.3" ry="1.9" fill="#a8a8a8"/>
<ellipse cx="356.5" cy="207.7" rx="5.6" ry="4.3" fill="#222"/>
<ellipse cx="356.5" cy="212.8" rx="5.4" ry="6.9" fill="url(#tfg)"/>
<rect x="352.0" y="210.0" width="9" height="1.9" rx="0.7" fill="#333" opacity="0.42"/>
<ellipse cx="354.4" cy="210.9" rx="1.25" ry="0.75" fill="#2a2a2a" opacity="0.78"/><ellipse cx="358.6" cy="210.9" rx="1.25" ry="0.75" fill="#2a2a2a" opacity="0.78"/>
<rect x="356.0" y="211.6" width="1.2" height="2.6" fill="#9a9a9a" opacity="0.7"/>
<rect x="354.6" y="215.3" width="3.8" height="0.9" fill="#5e5e5e" opacity="0.8"/>
<path d="M378.5 298.0 L378.5 245.2 Q379.5 238.2 393.0 234.2 L404.0 234.2 Q417.5 238.2 418.5 245.2 L418.5 298.0 Z" fill="#353535"/>
<path d="M380.5 243.2 Q381.5 238.7 392.5 235.4" stroke="#fff" stroke-opacity="0.10" stroke-width="2" fill="none"/>
<path d="M416.5 243.2 Q415.5 238.7 404.5 235.4" stroke="#fff" stroke-opacity="0.10" stroke-width="2" fill="none"/>
<path d="M393.7 234.2 L398.5 252.2 L403.3 234.2 Z" fill="#000" fill-opacity="0.35"/>
<path d="M394.0 233.0 L403.0 233.0 L399.6 247.2 L397.4 247.2 Z" fill="#f0f0f0"/>
<path d="M393.3 233.6 L397.3 249.7 M403.7 233.6 L399.7 249.7" stroke="#fff" stroke-opacity="0.16" stroke-width="1.3" fill="none"/>
<path d="M397.6 235.4 L399.4 235.4 L399.5 247.2 L397.5 247.2 Z" fill="#151515"/>
<rect x="395.9" y="230.0" width="5.2" height="4.2" fill="#a8a8a8"/>
<ellipse cx="398.5" cy="226.0" rx="6.3" ry="1.9" fill="#a8a8a8"/>
<ellipse cx="398.5" cy="221.7" rx="5.6" ry="4.3" fill="#2a2a2a"/>
<ellipse cx="398.5" cy="226.8" rx="5.4" ry="6.9" fill="url(#tfg)"/>
<ellipse cx="396.4" cy="224.9" rx="1.25" ry="0.75" fill="#2a2a2a" opacity="0.78"/><ellipse cx="400.6" cy="224.9" rx="1.25" ry="0.75" fill="#2a2a2a" opacity="0.78"/>
<rect x="398.0" y="225.6" width="1.2" height="2.6" fill="#9a9a9a" opacity="0.7"/>
<rect x="396.6" y="229.3" width="3.8" height="0.9" fill="#5e5e5e" opacity="0.8"/>
<path d="M163.3 277.3 L163.3 248.5 Q164.3 241.5 175.8 237.5 L186.8 237.5 Q198.3 241.5 199.3 248.5 L199.3 277.3 Z" fill="#4c4c4c"/>
<path d="M165.3 246.5 Q166.3 242.0 175.3 238.7" stroke="#fff" stroke-opacity="0.10" stroke-width="2" fill="none"/>
<path d="M197.3 246.5 Q196.3 242.0 187.3 238.7" stroke="#fff" stroke-opacity="0.10" stroke-width="2" fill="none"/>
<path d="M176.5 237.5 L181.3 256.5 L186.1 237.5 Z" fill="#000" fill-opacity="0.35"/>
<path d="M176.8 236.3 L185.8 236.3 L182.4 251.5 L180.2 251.5 Z" fill="#f0f0f0"/>
<path d="M176.1 236.9 L180.1 254.0 M186.5 236.9 L182.5 254.0" stroke="#fff" stroke-opacity="0.16" stroke-width="1.3" fill="none"/>
<path d="M180.4 238.7 L182.2 238.7 L182.3 251.5 L180.3 251.5 Z" fill="#151515"/>
<rect x="178.7" y="233.3" width="5.2" height="4.2" fill="#a8a8a8"/>
<ellipse cx="181.3" cy="229.3" rx="6.3" ry="1.9" fill="#a8a8a8"/>
<ellipse cx="181.3" cy="225.0" rx="5.6" ry="4.3" fill="#1c1c1c"/>
<ellipse cx="181.3" cy="230.1" rx="5.4" ry="6.9" fill="url(#tfg)"/>
<rect x="176.8" y="227.3" width="9" height="1.9" rx="0.7" fill="#333" opacity="0.42"/>
<ellipse cx="179.2" cy="228.2" rx="1.25" ry="0.75" fill="#2a2a2a" opacity="0.78"/><ellipse cx="183.4" cy="228.2" rx="1.25" ry="0.75" fill="#2a2a2a" opacity="0.78"/>
<rect x="180.8" y="228.9" width="1.2" height="2.6" fill="#9a9a9a" opacity="0.7"/>
<rect x="179.4" y="232.6" width="3.8" height="0.9" fill="#5e5e5e" opacity="0.8"/>
<path d="M205.0 283.5 L205.0 254.7 Q206.0 247.7 217.5 243.7 L228.5 243.7 Q240.0 247.7 241.0 254.7 L241.0 283.5 Z" fill="#262626"/>
<path d="M207.0 252.7 Q208.0 248.2 217.0 244.9" stroke="#fff" stroke-opacity="0.10" stroke-width="2" fill="none"/>
<path d="M239.0 252.7 Q238.0 248.2 229.0 244.9" stroke="#fff" stroke-opacity="0.10" stroke-width="2" fill="none"/>
<path d="M218.2 243.7 L223.0 259.7 L227.8 243.7 Z" fill="#000" fill-opacity="0.35"/>
<path d="M218.5 242.5 L227.5 242.5 L224.1 254.7 L221.9 254.7 Z" fill="#f0f0f0"/>
<path d="M217.8 243.1 L221.8 257.2 M228.2 243.1 L224.2 257.2" stroke="#fff" stroke-opacity="0.16" stroke-width="1.3" fill="none"/>
<path d="M222.1 244.9 L223.9 244.9 L224.0 254.7 L222.0 254.7 Z" fill="#151515"/>
<rect x="220.4" y="239.5" width="5.2" height="4.2" fill="#a8a8a8"/>
<ellipse cx="223.0" cy="235.5" rx="6.3" ry="1.9" fill="#a8a8a8"/>
<ellipse cx="223.0" cy="231.2" rx="5.6" ry="4.3" fill="#4a4a4a"/>
<ellipse cx="223.0" cy="236.3" rx="5.4" ry="6.9" fill="url(#tfg)"/>
<ellipse cx="220.9" cy="234.4" rx="1.25" ry="0.75" fill="#2a2a2a" opacity="0.78"/><ellipse cx="225.1" cy="234.4" rx="1.25" ry="0.75" fill="#2a2a2a" opacity="0.78"/>
<rect x="222.5" y="235.1" width="1.2" height="2.6" fill="#9a9a9a" opacity="0.7"/>
<rect x="221.1" y="238.8" width="3.8" height="0.9" fill="#5e5e5e" opacity="0.8"/>
<path d="M303.5 284.0 L303.5 255.2 Q304.5 248.2 316.0 244.2 L327.0 244.2 Q338.5 248.2 339.5 255.2 L339.5 284.0 Z" fill="#9a9a9a"/>
<path d="M305.5 253.2 Q306.5 248.7 315.5 245.4" stroke="#fff" stroke-opacity="0.10" stroke-width="2" fill="none"/>
<path d="M337.5 253.2 Q336.5 248.7 327.5 245.4" stroke="#fff" stroke-opacity="0.10" stroke-width="2" fill="none"/>
<path d="M316.7 244.2 L321.5 262.2 L326.3 244.2 Z" fill="#000" fill-opacity="0.35"/>
<path d="M317.0 243.0 L326.0 243.0 L322.6 257.2 L320.4 257.2 Z" fill="#f0f0f0"/>
<path d="M316.3 243.6 L320.3 259.7 M326.7 243.6 L322.7 259.7" stroke="#fff" stroke-opacity="0.16" stroke-width="1.3" fill="none"/>
<path d="M320.6 245.4 L322.4 245.4 L322.5 257.2 L320.5 257.2 Z" fill="#151515"/>
<rect x="318.9" y="240.0" width="5.2" height="4.2" fill="#a8a8a8"/>
<ellipse cx="321.5" cy="236.0" rx="6.3" ry="1.9" fill="#a8a8a8"/>
<ellipse cx="321.5" cy="231.7" rx="5.6" ry="4.3" fill="#1c1c1c"/>
<ellipse cx="321.5" cy="236.8" rx="5.4" ry="6.9" fill="url(#tfg)"/>
<ellipse cx="319.4" cy="234.9" rx="1.25" ry="0.75" fill="#2a2a2a" opacity="0.78"/><ellipse cx="323.6" cy="234.9" rx="1.25" ry="0.75" fill="#2a2a2a" opacity="0.78"/>
<rect x="321.0" y="235.6" width="1.2" height="2.6" fill="#9a9a9a" opacity="0.7"/>
<rect x="319.6" y="239.3" width="3.8" height="0.9" fill="#5e5e5e" opacity="0.8"/>
<path d="M235.5 285.0 L235.5 256.2 Q236.5 249.2 248.0 245.2 L259.0 245.2 Q270.5 249.2 271.5 256.2 L271.5 285.0 Z" fill="#2a2a2a"/>
<path d="M237.5 254.2 Q238.5 249.7 247.5 246.4" stroke="#fff" stroke-opacity="0.10" stroke-width="2" fill="none"/>
<path d="M269.5 254.2 Q268.5 249.7 259.5 246.4" stroke="#fff" stroke-opacity="0.10" stroke-width="2" fill="none"/>
<path d="M248.7 245.2 L253.5 261.2 L258.3 245.2 Z" fill="#000" fill-opacity="0.35"/>
<path d="M249.0 244.0 L258.0 244.0 L254.6 256.2 L252.4 256.2 Z" fill="#f0f0f0"/>
<path d="M248.3 244.6 L252.3 258.7 M258.7 244.6 L254.7 258.7" stroke="#fff" stroke-opacity="0.16" stroke-width="1.3" fill="none"/>
<path d="M252.6 246.4 L254.4 246.4 L254.5 256.2 L252.5 256.2 Z" fill="#151515"/>
<rect x="250.9" y="241.0" width="5.2" height="4.2" fill="#a8a8a8"/>
<ellipse cx="253.5" cy="237.0" rx="6.3" ry="1.9" fill="#a8a8a8"/>
<ellipse cx="253.5" cy="232.7" rx="5.6" ry="4.3" fill="#161616"/>
<ellipse cx="253.5" cy="237.8" rx="5.4" ry="6.9" fill="url(#tfg)"/>
<rect x="249.0" y="235.0" width="9" height="1.9" rx="0.7" fill="#333" opacity="0.42"/>
<ellipse cx="251.4" cy="235.9" rx="1.25" ry="0.75" fill="#2a2a2a" opacity="0.78"/><ellipse cx="255.6" cy="235.9" rx="1.25" ry="0.75" fill="#2a2a2a" opacity="0.78"/>
<rect x="253.0" y="236.6" width="1.2" height="2.6" fill="#9a9a9a" opacity="0.7"/>
<rect x="251.6" y="240.3" width="3.8" height="0.9" fill="#5e5e5e" opacity="0.8"/>
<path d="M326.8 285.2 L326.8 256.4 Q327.8 249.4 339.3 245.4 L350.3 245.4 Q361.8 249.4 362.8 256.4 L362.8 285.2 Z" fill="#1f1f1f"/>
<path d="M328.8 254.4 Q329.8 249.9 338.8 246.6" stroke="#fff" stroke-opacity="0.10" stroke-width="2" fill="none"/>
<path d="M360.8 254.4 Q359.8 249.9 350.8 246.6" stroke="#fff" stroke-opacity="0.10" stroke-width="2" fill="none"/>
<path d="M340.0 245.4 L344.8 260.4 L349.6 245.4 Z" fill="#000" fill-opacity="0.35"/>
<path d="M340.3 244.2 L349.3 244.2 L345.9 255.4 L343.7 255.4 Z" fill="#f0f0f0"/>
<path d="M339.6 244.8 L343.6 257.9 M350.0 244.8 L346.0 257.9" stroke="#fff" stroke-opacity="0.16" stroke-width="1.3" fill="none"/>
<path d="M343.9 246.6 L345.7 246.6 L345.8 255.4 L343.8 255.4 Z" fill="#151515"/>
<rect x="342.2" y="241.2" width="5.2" height="4.2" fill="#a8a8a8"/>
<ellipse cx="344.8" cy="237.2" rx="6.3" ry="1.9" fill="#a8a8a8"/>
<ellipse cx="344.8" cy="232.9" rx="5.6" ry="4.3" fill="#141414"/>
<ellipse cx="344.8" cy="238.0" rx="5.4" ry="6.9" fill="url(#tfg)"/>
<ellipse cx="342.7" cy="236.1" rx="1.25" ry="0.75" fill="#2a2a2a" opacity="0.78"/><ellipse cx="346.9" cy="236.1" rx="1.25" ry="0.75" fill="#2a2a2a" opacity="0.78"/>
<rect x="344.3" y="236.8" width="1.2" height="2.6" fill="#9a9a9a" opacity="0.7"/>
<rect x="342.9" y="240.5" width="3.8" height="0.9" fill="#5e5e5e" opacity="0.8"/>
<path d="M266.2 286.0 L266.2 257.2 Q267.2 250.2 278.7 246.2 L289.7 246.2 Q301.2 250.2 302.2 257.2 L302.2 286.0 Z" fill="#585858"/>
<path d="M268.2 255.2 Q269.2 250.7 278.2 247.4" stroke="#fff" stroke-opacity="0.10" stroke-width="2" fill="none"/>
<path d="M300.2 255.2 Q299.2 250.7 290.2 247.4" stroke="#fff" stroke-opacity="0.10" stroke-width="2" fill="none"/>
<path d="M279.4 246.2 L284.2 263.2 L289.0 246.2 Z" fill="#000" fill-opacity="0.35"/>
<path d="M279.7 245.0 L288.7 245.0 L285.3 258.2 L283.1 258.2 Z" fill="#f0f0f0"/>
<path d="M279.0 245.6 L283.0 260.7 M289.4 245.6 L285.4 260.7" stroke="#fff" stroke-opacity="0.16" stroke-width="1.3" fill="none"/>
<path d="M283.3 247.4 L285.1 247.4 L285.2 258.2 L283.2 258.2 Z" fill="#151515"/>
<rect x="281.6" y="242.0" width="5.2" height="4.2" fill="#a8a8a8"/>
<ellipse cx="284.2" cy="238.0" rx="6.3" ry="1.9" fill="#a8a8a8"/>
<ellipse cx="284.2" cy="233.7" rx="5.6" ry="4.3" fill="#3a3a3a"/>
<ellipse cx="284.2" cy="238.8" rx="5.4" ry="6.9" fill="url(#tfg)"/>
<ellipse cx="282.1" cy="236.9" rx="1.25" ry="0.75" fill="#2a2a2a" opacity="0.78"/><ellipse cx="286.3" cy="236.9" rx="1.25" ry="0.75" fill="#2a2a2a" opacity="0.78"/>
<rect x="283.7" y="237.6" width="1.2" height="2.6" fill="#9a9a9a" opacity="0.7"/>
<rect x="282.3" y="241.3" width="3.8" height="0.9" fill="#5e5e5e" opacity="0.8"/>
<path d="M358.3 288.3 L358.3 267.5 Q359.3 260.5 365.8 256.5 L376.8 256.5 Q383.3 260.5 384.3 267.5 L384.3 288.3 Z" fill="#141414"/>
<path d="M360.3 265.5 Q361.3 261.0 365.3 257.7" stroke="#fff" stroke-opacity="0.10" stroke-width="2" fill="none"/>
<path d="M382.3 265.5 Q381.3 261.0 377.3 257.7" stroke="#fff" stroke-opacity="0.10" stroke-width="2" fill="none"/>
<ellipse cx="371.3" cy="247.8" rx="7.8" ry="9" fill="#1d1d1d"/>
<ellipse cx="371.6" cy="249.3" rx="4.7" ry="5.9" fill="url(#tfg)"/>
<rect x="368.5" y="247.7" width="5.6" height="1.1" fill="#444" opacity="0.8"/>
<rect x="369.9" y="251.7" width="2.8" height="0.9" fill="#555" opacity="0.8"/>
<path d="M366.3 256.9 Q371.3 254.9 376.3 256.9 L374.9 259.3 L371.3 257.5 L367.7 259.3 Z" fill="#f0f0f0"/>
<path d="M321.0 310.5 L321.0 283.7 Q322.0 276.7 333.5 272.7 L344.5 272.7 Q356.0 276.7 357.0 283.7 L357.0 310.5 Z" fill="#727272"/>
<path d="M323.0 281.7 Q324.0 277.2 333.0 273.9" stroke="#fff" stroke-opacity="0.10" stroke-width="2" fill="none"/>
<path d="M355.0 281.7 Q354.0 277.2 345.0 273.9" stroke="#fff" stroke-opacity="0.10" stroke-width="2" fill="none"/>
<path d="M334.2 272.7 L339.0 291.7 L343.8 272.7 Z" fill="#000" fill-opacity="0.35"/>
<path d="M334.5 271.5 L343.5 271.5 L340.1 286.7 L337.9 286.7 Z" fill="#f0f0f0"/>
<path d="M333.8 272.1 L337.8 289.2 M344.2 272.1 L340.2 289.2" stroke="#fff" stroke-opacity="0.16" stroke-width="1.3" fill="none"/>
<path d="M338.1 273.9 L339.9 273.9 L340.0 286.7 L338.0 286.7 Z" fill="#151515"/>
<rect x="336.4" y="268.5" width="5.2" height="4.2" fill="#a8a8a8"/>
<ellipse cx="339.0" cy="264.5" rx="6.3" ry="1.9" fill="#a8a8a8"/>
<ellipse cx="339.0" cy="260.2" rx="5.6" ry="4.3" fill="#1c1c1c"/>
<ellipse cx="339.0" cy="265.3" rx="5.4" ry="6.9" fill="url(#tfg)"/>
<ellipse cx="336.9" cy="263.4" rx="1.25" ry="0.75" fill="#2a2a2a" opacity="0.78"/><ellipse cx="341.1" cy="263.4" rx="1.25" ry="0.75" fill="#2a2a2a" opacity="0.78"/>
<rect x="338.5" y="264.1" width="1.2" height="2.6" fill="#9a9a9a" opacity="0.7"/>
<rect x="337.1" y="267.8" width="3.8" height="0.9" fill="#5e5e5e" opacity="0.8"/>
<path d="M322.0 308.5 h34 v30 h-34 z" fill="#1a1a1a"/>
<path d="M324.0 310.5 h12 v28 h-12 z M342.0 310.5 h12 v28 h-12 z" fill="#262626"/>
<path d="M242.5 314.0 L242.5 287.2 Q243.5 280.2 255.0 276.2 L266.0 276.2 Q277.5 280.2 278.5 287.2 L278.5 314.0 Z" fill="#2c2c2c"/>
<path d="M244.5 285.2 Q245.5 280.7 254.5 277.4" stroke="#fff" stroke-opacity="0.10" stroke-width="2" fill="none"/>
<path d="M276.5 285.2 Q275.5 280.7 266.5 277.4" stroke="#fff" stroke-opacity="0.10" stroke-width="2" fill="none"/>
<path d="M255.7 276.2 L260.5 294.2 L265.3 276.2 Z" fill="#000" fill-opacity="0.35"/>
<path d="M256.0 275.0 L265.0 275.0 L261.6 289.2 L259.4 289.2 Z" fill="#f0f0f0"/>
<path d="M255.3 275.6 L259.3 291.7 M265.7 275.6 L261.7 291.7" stroke="#fff" stroke-opacity="0.16" stroke-width="1.3" fill="none"/>
<path d="M259.6 277.4 L261.4 277.4 L261.5 289.2 L259.5 289.2 Z" fill="#151515"/>
<rect x="257.9" y="272.0" width="5.2" height="4.2" fill="#a8a8a8"/>
<ellipse cx="260.5" cy="268.0" rx="6.3" ry="1.9" fill="#a8a8a8"/>
<ellipse cx="260.5" cy="263.7" rx="5.6" ry="4.3" fill="#1c1c1c"/>
<ellipse cx="260.5" cy="268.8" rx="5.4" ry="6.9" fill="url(#tfg)"/>
<rect x="256.0" y="266.0" width="9" height="1.9" rx="0.7" fill="#333" opacity="0.42"/>
<ellipse cx="258.4" cy="266.9" rx="1.25" ry="0.75" fill="#2a2a2a" opacity="0.78"/><ellipse cx="262.6" cy="266.9" rx="1.25" ry="0.75" fill="#2a2a2a" opacity="0.78"/>
<rect x="260.0" y="267.6" width="1.2" height="2.6" fill="#9a9a9a" opacity="0.7"/>
<rect x="258.6" y="271.3" width="3.8" height="0.9" fill="#5e5e5e" opacity="0.8"/>
<path d="M243.5 312.0 h34 v30 h-34 z" fill="#1a1a1a"/>
<path d="M245.5 314.0 h12 v28 h-12 z M263.5 314.0 h12 v28 h-12 z" fill="#262626"/>
<path d="M281.0 316.5 L281.0 289.7 Q282.0 282.7 293.5 278.7 L304.5 278.7 Q316.0 282.7 317.0 289.7 L317.0 316.5 Z" fill="#8c8c8c"/>
<path d="M283.0 287.7 Q284.0 283.2 293.0 279.9" stroke="#fff" stroke-opacity="0.10" stroke-width="2" fill="none"/>
<path d="M315.0 287.7 Q314.0 283.2 305.0 279.9" stroke="#fff" stroke-opacity="0.10" stroke-width="2" fill="none"/>
<path d="M294.2 278.7 L299.0 296.7 L303.8 278.7 Z" fill="#000" fill-opacity="0.35"/>
<path d="M294.5 277.5 L303.5 277.5 L300.1 291.7 L297.9 291.7 Z" fill="#f0f0f0"/>
<path d="M293.8 278.1 L297.8 294.2 M304.2 278.1 L300.2 294.2" stroke="#fff" stroke-opacity="0.16" stroke-width="1.3" fill="none"/>
<path d="M298.1 279.9 L299.9 279.9 L300.0 291.7 L298.0 291.7 Z" fill="#151515"/>
<rect x="296.4" y="274.5" width="5.2" height="4.2" fill="#a8a8a8"/>
<ellipse cx="299.0" cy="270.5" rx="6.3" ry="1.9" fill="#a8a8a8"/>
<ellipse cx="299.0" cy="266.2" rx="5.6" ry="4.3" fill="#1c1c1c"/>
<ellipse cx="299.0" cy="271.3" rx="5.4" ry="6.9" fill="url(#tfg)"/>
<rect x="294.5" y="268.5" width="9" height="1.9" rx="0.7" fill="#333" opacity="0.42"/>
<ellipse cx="296.9" cy="269.4" rx="1.25" ry="0.75" fill="#2a2a2a" opacity="0.78"/><ellipse cx="301.1" cy="269.4" rx="1.25" ry="0.75" fill="#2a2a2a" opacity="0.78"/>
<rect x="298.5" y="270.1" width="1.2" height="2.6" fill="#9a9a9a" opacity="0.7"/>
<rect x="297.1" y="273.8" width="3.8" height="0.9" fill="#5e5e5e" opacity="0.8"/>
<path d="M282.0 314.5 h34 v30 h-34 z" fill="#1a1a1a"/>
<path d="M284.0 316.5 h12 v28 h-12 z M302.0 316.5 h12 v28 h-12 z" fill="#262626"/>
<path d="M207.0 319.0 L207.0 292.2 Q208.0 285.2 219.5 281.2 L230.5 281.2 Q242.0 285.2 243.0 292.2 L243.0 319.0 Z" fill="#303030"/>
<path d="M209.0 290.2 Q210.0 285.7 219.0 282.4" stroke="#fff" stroke-opacity="0.10" stroke-width="2" fill="none"/>
<path d="M241.0 290.2 Q240.0 285.7 231.0 282.4" stroke="#fff" stroke-opacity="0.10" stroke-width="2" fill="none"/>
<path d="M220.2 281.2 L225.0 298.2 L229.8 281.2 Z" fill="#000" fill-opacity="0.35"/>
<path d="M220.5 280.0 L229.5 280.0 L226.1 293.2 L223.9 293.2 Z" fill="#f0f0f0"/>
<path d="M219.8 280.6 L223.8 295.7 M230.2 280.6 L226.2 295.7" stroke="#fff" stroke-opacity="0.16" stroke-width="1.3" fill="none"/>
<path d="M224.1 282.4 L225.9 282.4 L226.0 293.2 L224.0 293.2 Z" fill="#151515"/>
<rect x="222.4" y="277.0" width="5.2" height="4.2" fill="#a8a8a8"/>
<ellipse cx="225.0" cy="273.0" rx="6.3" ry="1.9" fill="#a8a8a8"/>
<ellipse cx="225.0" cy="268.7" rx="5.6" ry="4.3" fill="#4a4a4a"/>
<ellipse cx="225.0" cy="273.8" rx="5.4" ry="6.9" fill="url(#tfg)"/>
<rect x="220.5" y="271.0" width="9" height="1.9" rx="0.7" fill="#333" opacity="0.42"/>
<ellipse cx="222.9" cy="271.9" rx="1.25" ry="0.75" fill="#2a2a2a" opacity="0.78"/><ellipse cx="227.1" cy="271.9" rx="1.25" ry="0.75" fill="#2a2a2a" opacity="0.78"/>
<rect x="224.5" y="272.6" width="1.2" height="2.6" fill="#9a9a9a" opacity="0.7"/>
<rect x="223.1" y="276.3" width="3.8" height="0.9" fill="#5e5e5e" opacity="0.8"/>
<path d="M208.0 317.0 h34 v30 h-34 z" fill="#1a1a1a"/>
<path d="M210.0 319.0 h12 v28 h-12 z M228.0 319.0 h12 v28 h-12 z" fill="#262626"/>
<path d="M352.5 320.4 L352.5 293.6 Q353.5 286.6 365.0 282.6 L376.0 282.6 Q387.5 286.6 388.5 293.6 L388.5 320.4 Z" fill="#2c2c2c"/>
<path d="M354.5 291.6 Q355.5 287.1 364.5 283.8" stroke="#fff" stroke-opacity="0.10" stroke-width="2" fill="none"/>
<path d="M386.5 291.6 Q385.5 287.1 376.5 283.8" stroke="#fff" stroke-opacity="0.10" stroke-width="2" fill="none"/>
<path d="M365.7 282.6 L370.5 297.6 L375.3 282.6 Z" fill="#000" fill-opacity="0.35"/>
<path d="M366.0 281.4 L375.0 281.4 L371.6 292.6 L369.4 292.6 Z" fill="#f0f0f0"/>
<path d="M365.3 282.0 L369.3 295.1 M375.7 282.0 L371.7 295.1" stroke="#fff" stroke-opacity="0.16" stroke-width="1.3" fill="none"/>
<path d="M369.6 283.8 L371.4 283.8 L371.5 292.6 L369.5 292.6 Z" fill="#151515"/>
<rect x="367.9" y="278.4" width="5.2" height="4.2" fill="#a8a8a8"/>
<ellipse cx="370.5" cy="274.4" rx="6.3" ry="1.9" fill="#a8a8a8"/>
<ellipse cx="370.5" cy="270.1" rx="5.6" ry="4.3" fill="#1c1c1c"/>
<ellipse cx="370.5" cy="275.2" rx="5.4" ry="6.9" fill="url(#tfg)"/>
<rect x="366.0" y="272.4" width="9" height="1.9" rx="0.7" fill="#333" opacity="0.42"/>
<ellipse cx="368.4" cy="273.3" rx="1.25" ry="0.75" fill="#2a2a2a" opacity="0.78"/><ellipse cx="372.6" cy="273.3" rx="1.25" ry="0.75" fill="#2a2a2a" opacity="0.78"/>
<rect x="370.0" y="274.0" width="1.2" height="2.6" fill="#9a9a9a" opacity="0.7"/>
<rect x="368.6" y="277.7" width="3.8" height="0.9" fill="#5e5e5e" opacity="0.8"/>
<path d="M353.5 318.4 h34 v30 h-34 z" fill="#1a1a1a"/>
<path d="M355.5 320.4 h12 v28 h-12 z M373.5 320.4 h12 v28 h-12 z" fill="#262626"/>
<path d="M172.8 320.5 L172.8 293.7 Q173.8 286.7 185.3 282.7 L196.3 282.7 Q207.8 286.7 208.8 293.7 L208.8 320.5 Z" fill="#3a3a3a"/>
<path d="M174.8 291.7 Q175.8 287.2 184.8 283.9" stroke="#fff" stroke-opacity="0.10" stroke-width="2" fill="none"/>
<path d="M206.8 291.7 Q205.8 287.2 196.8 283.9" stroke="#fff" stroke-opacity="0.10" stroke-width="2" fill="none"/>
<path d="M186.0 282.7 L190.8 304.7 L195.6 282.7 Z" fill="#000" fill-opacity="0.35"/>
<path d="M186.3 281.5 L195.3 281.5 L191.9 299.7 L189.7 299.7 Z" fill="#f0f0f0"/>
<path d="M185.6 282.1 L189.6 302.2 M196.0 282.1 L192.0 302.2" stroke="#fff" stroke-opacity="0.16" stroke-width="1.3" fill="none"/>
<path d="M189.9 283.9 L191.7 283.9 L191.8 299.7 L189.8 299.7 Z" fill="#151515"/>
<rect x="188.2" y="278.5" width="5.2" height="4.2" fill="#a8a8a8"/>
<ellipse cx="190.8" cy="274.5" rx="6.3" ry="1.9" fill="#a8a8a8"/>
<ellipse cx="190.8" cy="270.2" rx="5.6" ry="4.3" fill="#141414"/>
<ellipse cx="190.8" cy="275.3" rx="5.4" ry="6.9" fill="url(#tfg)"/>
<ellipse cx="188.7" cy="273.4" rx="1.25" ry="0.75" fill="#2a2a2a" opacity="0.78"/><ellipse cx="192.9" cy="273.4" rx="1.25" ry="0.75" fill="#2a2a2a" opacity="0.78"/>
<rect x="190.3" y="274.1" width="1.2" height="2.6" fill="#9a9a9a" opacity="0.7"/>
<rect x="188.9" y="277.8" width="3.8" height="0.9" fill="#5e5e5e" opacity="0.8"/>
<path d="M173.8 318.5 h34 v30 h-34 z" fill="#1a1a1a"/>
<path d="M175.8 320.5 h12 v28 h-12 z M193.8 320.5 h12 v28 h-12 z" fill="#262626"/>
<path d="M341.4 349.2 L341.4 338.4 Q342.4 331.4 352.9 327.4 L363.9 327.4 Q374.4 331.4 375.4 338.4 L375.4 349.2 Z" fill="#2c2c2c"/>
<path d="M343.4 336.4 Q344.4 331.9 352.4 328.6" stroke="#fff" stroke-opacity="0.10" stroke-width="2" fill="none"/>
<path d="M373.4 336.4 Q372.4 331.9 364.4 328.6" stroke="#fff" stroke-opacity="0.10" stroke-width="2" fill="none"/>
<path d="M353.6 327.4 L358.4 339.4 L363.2 327.4 Z" fill="#000" fill-opacity="0.35"/>
<path d="M353.9 326.2 L362.9 326.2 L359.5 334.4 L357.3 334.4 Z" fill="#f0f0f0"/>
<path d="M353.2 326.8 L357.2 336.9 M363.6 326.8 L359.6 336.9" stroke="#fff" stroke-opacity="0.16" stroke-width="1.3" fill="none"/>
<path d="M357.5 328.6 L359.3 328.6 L359.4 334.4 L357.4 334.4 Z" fill="#151515"/>
<rect x="355.8" y="323.2" width="5.2" height="4.2" fill="#a8a8a8"/>
<ellipse cx="358.4" cy="319.2" rx="6.3" ry="1.9" fill="#a8a8a8"/>
<ellipse cx="358.4" cy="314.9" rx="5.6" ry="4.3" fill="#161616"/>
<ellipse cx="358.4" cy="320.0" rx="5.4" ry="6.9" fill="url(#tfg)"/>
<rect x="353.9" y="317.2" width="9" height="1.9" rx="0.7" fill="#333" opacity="0.42"/>
<ellipse cx="356.3" cy="318.1" rx="1.25" ry="0.75" fill="#2a2a2a" opacity="0.78"/><ellipse cx="360.5" cy="318.1" rx="1.25" ry="0.75" fill="#2a2a2a" opacity="0.78"/>
<rect x="357.9" y="318.8" width="1.2" height="2.6" fill="#9a9a9a" opacity="0.7"/>
<rect x="356.5" y="322.5" width="3.8" height="0.9" fill="#5e5e5e" opacity="0.8"/>
<path d="M272.6 350.0 L272.6 339.2 Q273.6 332.2 284.1 328.2 L295.1 328.2 Q305.6 332.2 306.6 339.2 L306.6 350.0 Z" fill="#262626"/>
<path d="M274.6 337.2 Q275.6 332.7 283.6 329.4" stroke="#fff" stroke-opacity="0.10" stroke-width="2" fill="none"/>
<path d="M304.6 337.2 Q303.6 332.7 295.6 329.4" stroke="#fff" stroke-opacity="0.10" stroke-width="2" fill="none"/>
<path d="M284.8 328.2 L289.6 340.2 L294.4 328.2 Z" fill="#000" fill-opacity="0.35"/>
<path d="M285.1 327.0 L294.1 327.0 L290.7 335.2 L288.5 335.2 Z" fill="#f0f0f0"/>
<path d="M284.4 327.6 L288.4 337.7 M294.8 327.6 L290.8 337.7" stroke="#fff" stroke-opacity="0.16" stroke-width="1.3" fill="none"/>
<path d="M288.7 329.4 L290.5 329.4 L290.6 335.2 L288.6 335.2 Z" fill="#151515"/>
<rect x="287.0" y="324.0" width="5.2" height="4.2" fill="#a8a8a8"/>
<ellipse cx="289.6" cy="320.0" rx="6.3" ry="1.9" fill="#a8a8a8"/>
<ellipse cx="289.6" cy="315.7" rx="5.6" ry="4.3" fill="#161616"/>
<ellipse cx="289.6" cy="320.8" rx="5.4" ry="6.9" fill="url(#tfg)"/>
<ellipse cx="287.5" cy="318.9" rx="1.25" ry="0.75" fill="#2a2a2a" opacity="0.78"/><ellipse cx="291.7" cy="318.9" rx="1.25" ry="0.75" fill="#2a2a2a" opacity="0.78"/>
<rect x="289.1" y="319.6" width="1.2" height="2.6" fill="#9a9a9a" opacity="0.7"/>
<rect x="287.7" y="323.3" width="3.8" height="0.9" fill="#5e5e5e" opacity="0.8"/>
<path d="M307.9 351.0 L307.9 340.2 Q308.9 333.2 319.4 329.2 L330.4 329.2 Q340.9 333.2 341.9 340.2 L341.9 351.0 Z" fill="#2a2a2a"/>
<path d="M309.9 338.2 Q310.9 333.7 318.9 330.4" stroke="#fff" stroke-opacity="0.10" stroke-width="2" fill="none"/>
<path d="M339.9 338.2 Q338.9 333.7 330.9 330.4" stroke="#fff" stroke-opacity="0.10" stroke-width="2" fill="none"/>
<path d="M320.1 329.2 L324.9 341.2 L329.7 329.2 Z" fill="#000" fill-opacity="0.35"/>
<path d="M320.4 328.0 L329.4 328.0 L326.0 336.2 L323.8 336.2 Z" fill="#f0f0f0"/>
<path d="M319.7 328.6 L323.7 338.7 M330.1 328.6 L326.1 338.7" stroke="#fff" stroke-opacity="0.16" stroke-width="1.3" fill="none"/>
<path d="M324.0 330.4 L325.8 330.4 L325.9 336.2 L323.9 336.2 Z" fill="#151515"/>
<rect x="322.3" y="325.0" width="5.2" height="4.2" fill="#a8a8a8"/>
<ellipse cx="324.9" cy="321.0" rx="6.3" ry="1.9" fill="#a8a8a8"/>
<ellipse cx="324.9" cy="316.7" rx="5.6" ry="4.3" fill="#161616"/>
<ellipse cx="324.9" cy="321.8" rx="5.4" ry="6.9" fill="url(#tfg)"/>
<ellipse cx="322.8" cy="319.9" rx="1.25" ry="0.75" fill="#2a2a2a" opacity="0.78"/><ellipse cx="327.0" cy="319.9" rx="1.25" ry="0.75" fill="#2a2a2a" opacity="0.78"/>
<rect x="324.4" y="320.6" width="1.2" height="2.6" fill="#9a9a9a" opacity="0.7"/>
<rect x="323.0" y="324.3" width="3.8" height="0.9" fill="#5e5e5e" opacity="0.8"/>
<path d="M379.2 363.2 L379.2 352.4 Q380.2 345.4 390.7 341.4 L401.7 341.4 Q412.2 345.4 413.2 352.4 L413.2 363.2 Z" fill="#222"/>
<path d="M381.2 350.4 Q382.2 345.9 390.2 342.6" stroke="#fff" stroke-opacity="0.10" stroke-width="2" fill="none"/>
<path d="M411.2 350.4 Q410.2 345.9 402.2 342.6" stroke="#fff" stroke-opacity="0.10" stroke-width="2" fill="none"/>
<path d="M391.4 341.4 L396.2 351.4 L401.0 341.4 Z" fill="#000" fill-opacity="0.35"/>
<path d="M391.7 340.2 L400.7 340.2 L397.3 346.4 L395.1 346.4 Z" fill="#f0f0f0"/>
<path d="M391.0 340.8 L395.0 348.9 M401.4 340.8 L397.4 348.9" stroke="#fff" stroke-opacity="0.16" stroke-width="1.3" fill="none"/>
<path d="M395.3 342.6 L397.1 342.6 L397.2 346.4 L395.2 346.4 Z" fill="#151515"/>
<rect x="393.6" y="337.2" width="5.2" height="4.2" fill="#a8a8a8"/>
<ellipse cx="396.2" cy="333.2" rx="6.3" ry="1.9" fill="#a8a8a8"/>
<ellipse cx="396.2" cy="328.9" rx="5.6" ry="4.3" fill="#2a2a2a"/>
<ellipse cx="396.2" cy="334.0" rx="5.4" ry="6.9" fill="url(#tfg)"/>
<ellipse cx="394.1" cy="332.1" rx="1.25" ry="0.75" fill="#2a2a2a" opacity="0.78"/><ellipse cx="398.3" cy="332.1" rx="1.25" ry="0.75" fill="#2a2a2a" opacity="0.78"/>
<rect x="395.7" y="332.8" width="1.2" height="2.6" fill="#9a9a9a" opacity="0.7"/>
<rect x="394.3" y="336.5" width="3.8" height="0.9" fill="#5e5e5e" opacity="0.8"/>
<path d="M327.5 363.6 L327.5 352.8 Q328.5 345.8 339.0 341.8 L350.0 341.8 Q360.5 345.8 361.5 352.8 L361.5 363.6 Z" fill="#222"/>
<path d="M329.5 350.8 Q330.5 346.3 338.5 343.0" stroke="#fff" stroke-opacity="0.10" stroke-width="2" fill="none"/>
<path d="M359.5 350.8 Q358.5 346.3 350.5 343.0" stroke="#fff" stroke-opacity="0.10" stroke-width="2" fill="none"/>
<path d="M339.7 341.8 L344.5 351.8 L349.3 341.8 Z" fill="#000" fill-opacity="0.35"/>
<path d="M340.0 340.6 L349.0 340.6 L345.6 346.8 L343.4 346.8 Z" fill="#f0f0f0"/>
<path d="M339.3 341.2 L343.3 349.3 M349.7 341.2 L345.7 349.3" stroke="#fff" stroke-opacity="0.16" stroke-width="1.3" fill="none"/>
<path d="M343.6 343.0 L345.4 343.0 L345.5 346.8 L343.5 346.8 Z" fill="#151515"/>
<rect x="341.9" y="337.6" width="5.2" height="4.2" fill="#a8a8a8"/>
<ellipse cx="344.5" cy="333.6" rx="6.3" ry="1.9" fill="#a8a8a8"/>
<ellipse cx="344.5" cy="329.3" rx="5.6" ry="4.3" fill="#1a1a1a"/>
<ellipse cx="344.5" cy="334.4" rx="5.4" ry="6.9" fill="url(#tfg)"/>
<ellipse cx="342.4" cy="332.5" rx="1.25" ry="0.75" fill="#2a2a2a" opacity="0.78"/><ellipse cx="346.6" cy="332.5" rx="1.25" ry="0.75" fill="#2a2a2a" opacity="0.78"/>
<rect x="344.0" y="333.2" width="1.2" height="2.6" fill="#9a9a9a" opacity="0.7"/>
<rect x="342.6" y="336.9" width="3.8" height="0.9" fill="#5e5e5e" opacity="0.8"/>
<rect x="384" y="296" width="36" height="44" fill="#181818"/>
<ellipse cx="187.5" cy="317.5" rx="3.8" ry="2.4" fill="#d2d2d2"/>
<ellipse cx="201.5" cy="317.5" rx="3.8" ry="2.4" fill="#d2d2d2"/>
<ellipse cx="226" cy="318.5" rx="3.8" ry="2.4" fill="#d2d2d2"/>
<ellipse cx="235" cy="318.5" rx="3.8" ry="2.4" fill="#d2d2d2"/>
<ellipse cx="263.5" cy="320" rx="3.8" ry="2.4" fill="#d2d2d2"/>
<ellipse cx="302" cy="316" rx="3.8" ry="2.4" fill="#d2d2d2"/>
<ellipse cx="342" cy="318" rx="3.8" ry="2.4" fill="#d2d2d2"/>
<ellipse cx="372" cy="314" rx="3.8" ry="2.4" fill="#d2d2d2"/>
<rect x="378" y="296.5" width="5" height="1.6" fill="#e8e8e8"/><rect x="305" y="233" width="4" height="1.2" fill="#bbb"/><rect x="411" y="249" width="4" height="1.2" fill="#aaa"/>
<path d="M341.4 349.2 L341.4 338.4 Q342.4 331.4 352.9 327.4 L363.9 327.4 Q374.4 331.4 375.4 338.4 L375.4 349.2 Z" fill="#2c2c2c"/>
<path d="M343.4 336.4 Q344.4 331.9 352.4 328.6" stroke="#fff" stroke-opacity="0.10" stroke-width="2" fill="none"/>
<path d="M373.4 336.4 Q372.4 331.9 364.4 328.6" stroke="#fff" stroke-opacity="0.10" stroke-width="2" fill="none"/>
<path d="M353.6 327.4 L358.4 339.4 L363.2 327.4 Z" fill="#000" fill-opacity="0.35"/>
<path d="M353.9 326.2 L362.9 326.2 L359.5 334.4 L357.3 334.4 Z" fill="#f0f0f0"/>
<path d="M353.2 326.8 L357.2 336.9 M363.6 326.8 L359.6 336.9" stroke="#fff" stroke-opacity="0.16" stroke-width="1.3" fill="none"/>
<path d="M357.5 328.6 L359.3 328.6 L359.4 334.4 L357.4 334.4 Z" fill="#151515"/>
<rect x="355.8" y="323.2" width="5.2" height="4.2" fill="#a8a8a8"/>
<ellipse cx="358.4" cy="319.2" rx="6.3" ry="1.9" fill="#a8a8a8"/>
<ellipse cx="358.4" cy="314.9" rx="5.6" ry="4.3" fill="#161616"/>
<ellipse cx="358.4" cy="320.0" rx="5.4" ry="6.9" fill="url(#tfg)"/>
<rect x="353.9" y="317.2" width="9" height="1.9" rx="0.7" fill="#333" opacity="0.42"/>
<ellipse cx="356.3" cy="318.1" rx="1.25" ry="0.75" fill="#2a2a2a" opacity="0.78"/><ellipse cx="360.5" cy="318.1" rx="1.25" ry="0.75" fill="#2a2a2a" opacity="0.78"/>
<rect x="357.9" y="318.8" width="1.2" height="2.6" fill="#9a9a9a" opacity="0.7"/>
<rect x="356.5" y="322.5" width="3.8" height="0.9" fill="#5e5e5e" opacity="0.8"/>
<path d="M272.6 350.0 L272.6 339.2 Q273.6 332.2 284.1 328.2 L295.1 328.2 Q305.6 332.2 306.6 339.2 L306.6 350.0 Z" fill="#262626"/>
<path d="M274.6 337.2 Q275.6 332.7 283.6 329.4" stroke="#fff" stroke-opacity="0.10" stroke-width="2" fill="none"/>
<path d="M304.6 337.2 Q303.6 332.7 295.6 329.4" stroke="#fff" stroke-opacity="0.10" stroke-width="2" fill="none"/>
<path d="M284.8 328.2 L289.6 340.2 L294.4 328.2 Z" fill="#000" fill-opacity="0.35"/>
<path d="M285.1 327.0 L294.1 327.0 L290.7 335.2 L288.5 335.2 Z" fill="#f0f0f0"/>
<path d="M284.4 327.6 L288.4 337.7 M294.8 327.6 L290.8 337.7" stroke="#fff" stroke-opacity="0.16" stroke-width="1.3" fill="none"/>
<path d="M288.7 329.4 L290.5 329.4 L290.6 335.2 L288.6 335.2 Z" fill="#151515"/>
<rect x="287.0" y="324.0" width="5.2" height="4.2" fill="#a8a8a8"/>
<ellipse cx="289.6" cy="320.0" rx="6.3" ry="1.9" fill="#a8a8a8"/>
<ellipse cx="289.6" cy="315.7" rx="5.6" ry="4.3" fill="#161616"/>
<ellipse cx="289.6" cy="320.8" rx="5.4" ry="6.9" fill="url(#tfg)"/>
<ellipse cx="287.5" cy="318.9" rx="1.25" ry="0.75" fill="#2a2a2a" opacity="0.78"/><ellipse cx="291.7" cy="318.9" rx="1.25" ry="0.75" fill="#2a2a2a" opacity="0.78"/>
<rect x="289.1" y="319.6" width="1.2" height="2.6" fill="#9a9a9a" opacity="0.7"/>
<rect x="287.7" y="323.3" width="3.8" height="0.9" fill="#5e5e5e" opacity="0.8"/>
<path d="M307.9 351.0 L307.9 340.2 Q308.9 333.2 319.4 329.2 L330.4 329.2 Q340.9 333.2 341.9 340.2 L341.9 351.0 Z" fill="#2a2a2a"/>
<path d="M309.9 338.2 Q310.9 333.7 318.9 330.4" stroke="#fff" stroke-opacity="0.10" stroke-width="2" fill="none"/>
<path d="M339.9 338.2 Q338.9 333.7 330.9 330.4" stroke="#fff" stroke-opacity="0.10" stroke-width="2" fill="none"/>
<path d="M320.1 329.2 L324.9 341.2 L329.7 329.2 Z" fill="#000" fill-opacity="0.35"/>
<path d="M320.4 328.0 L329.4 328.0 L326.0 336.2 L323.8 336.2 Z" fill="#f0f0f0"/>
<path d="M319.7 328.6 L323.7 338.7 M330.1 328.6 L326.1 338.7" stroke="#fff" stroke-opacity="0.16" stroke-width="1.3" fill="none"/>
<path d="M324.0 330.4 L325.8 330.4 L325.9 336.2 L323.9 336.2 Z" fill="#151515"/>
<rect x="322.3" y="325.0" width="5.2" height="4.2" fill="#a8a8a8"/>
<ellipse cx="324.9" cy="321.0" rx="6.3" ry="1.9" fill="#a8a8a8"/>
<ellipse cx="324.9" cy="316.7" rx="5.6" ry="4.3" fill="#161616"/>
<ellipse cx="324.9" cy="321.8" rx="5.4" ry="6.9" fill="url(#tfg)"/>
<ellipse cx="322.8" cy="319.9" rx="1.25" ry="0.75" fill="#2a2a2a" opacity="0.78"/><ellipse cx="327.0" cy="319.9" rx="1.25" ry="0.75" fill="#2a2a2a" opacity="0.78"/>
<rect x="324.4" y="320.6" width="1.2" height="2.6" fill="#9a9a9a" opacity="0.7"/>
<rect x="323.0" y="324.3" width="3.8" height="0.9" fill="#5e5e5e" opacity="0.8"/>
<path d="M379.2 363.2 L379.2 352.4 Q380.2 345.4 390.7 341.4 L401.7 341.4 Q412.2 345.4 413.2 352.4 L413.2 363.2 Z" fill="#222"/>
<path d="M381.2 350.4 Q382.2 345.9 390.2 342.6" stroke="#fff" stroke-opacity="0.10" stroke-width="2" fill="none"/>
<path d="M411.2 350.4 Q410.2 345.9 402.2 342.6" stroke="#fff" stroke-opacity="0.10" stroke-width="2" fill="none"/>
<path d="M391.4 341.4 L396.2 351.4 L401.0 341.4 Z" fill="#000" fill-opacity="0.35"/>
<path d="M391.7 340.2 L400.7 340.2 L397.3 346.4 L395.1 346.4 Z" fill="#f0f0f0"/>
<path d="M391.0 340.8 L395.0 348.9 M401.4 340.8 L397.4 348.9" stroke="#fff" stroke-opacity="0.16" stroke-width="1.3" fill="none"/>
<path d="M395.3 342.6 L397.1 342.6 L397.2 346.4 L395.2 346.4 Z" fill="#151515"/>
<rect x="393.6" y="337.2" width="5.2" height="4.2" fill="#a8a8a8"/>
<ellipse cx="396.2" cy="333.2" rx="6.3" ry="1.9" fill="#a8a8a8"/>
<ellipse cx="396.2" cy="328.9" rx="5.6" ry="4.3" fill="#2a2a2a"/>
<ellipse cx="396.2" cy="334.0" rx="5.4" ry="6.9" fill="url(#tfg)"/>
<ellipse cx="394.1" cy="332.1" rx="1.25" ry="0.75" fill="#2a2a2a" opacity="0.78"/><ellipse cx="398.3" cy="332.1" rx="1.25" ry="0.75" fill="#2a2a2a" opacity="0.78"/>
<rect x="395.7" y="332.8" width="1.2" height="2.6" fill="#9a9a9a" opacity="0.7"/>
<rect x="394.3" y="336.5" width="3.8" height="0.9" fill="#5e5e5e" opacity="0.8"/>
<path d="M327.5 363.6 L327.5 352.8 Q328.5 345.8 339.0 341.8 L350.0 341.8 Q360.5 345.8 361.5 352.8 L361.5 363.6 Z" fill="#222"/>
<path d="M329.5 350.8 Q330.5 346.3 338.5 343.0" stroke="#fff" stroke-opacity="0.10" stroke-width="2" fill="none"/>
<path d="M359.5 350.8 Q358.5 346.3 350.5 343.0" stroke="#fff" stroke-opacity="0.10" stroke-width="2" fill="none"/>
<path d="M339.7 341.8 L344.5 351.8 L349.3 341.8 Z" fill="#000" fill-opacity="0.35"/>
<path d="M340.0 340.6 L349.0 340.6 L345.6 346.8 L343.4 346.8 Z" fill="#f0f0f0"/>
<path d="M339.3 341.2 L343.3 349.3 M349.7 341.2 L345.7 349.3" stroke="#fff" stroke-opacity="0.16" stroke-width="1.3" fill="none"/>
<path d="M343.6 343.0 L345.4 343.0 L345.5 346.8 L343.5 346.8 Z" fill="#151515"/>
<rect x="341.9" y="337.6" width="5.2" height="4.2" fill="#a8a8a8"/>
<ellipse cx="344.5" cy="333.6" rx="6.3" ry="1.9" fill="#a8a8a8"/>
<ellipse cx="344.5" cy="329.3" rx="5.6" ry="4.3" fill="#1a1a1a"/>
<ellipse cx="344.5" cy="334.4" rx="5.4" ry="6.9" fill="url(#tfg)"/>
<ellipse cx="342.4" cy="332.5" rx="1.25" ry="0.75" fill="#2a2a2a" opacity="0.78"/><ellipse cx="346.6" cy="332.5" rx="1.25" ry="0.75" fill="#2a2a2a" opacity="0.78"/>
<rect x="344.0" y="333.2" width="1.2" height="2.6" fill="#9a9a9a" opacity="0.7"/>
<rect x="342.6" y="336.9" width="3.8" height="0.9" fill="#5e5e5e" opacity="0.8"/>
</g>
<g fill="none" stroke="#e0442a" stroke-linecap="round"><circle cx="373.2" cy="248.5" r="16" stroke-width="2"/><path d="M386.5 258 L406.5 269.2" stroke-width="1.9"/><path d="M384 256.4 L390.6 257.2 L387.6 262 Z" fill="#e0442a" stroke-width="0.6"/></g>
</svg></div>
<div class="a kai" style="left:182.5px;top:34px;font-size:12px;letter-spacing:19.7px;font-weight:600;line-height:18px;white-space:nowrap">所处背景环境</div>
<div class="bl kai" style="top:62.4px">鲁斯没办法住校，进校就要遭受异样的待遇。</div>
<div class="dot" style="top:67.0px"></div>
<div class="bl kai" style="top:79.1px">哈佛法学院发的教科书上还赫然写着：<span class="q" style="text-align:right;padding-right:2.5px">“</span>土地，和</div>
<div class="dot" style="top:83.7px"></div>
<div class="bl kai" style="top:95.8px">女人一样，是用来占有的！<span class="q" style="text-align:left">”</span></div>
<div class="bl kai" style="top:112.5px">教授们总是有意无意地忽略女学生的存在，上课从</div>
<div class="dot" style="top:117.1px"></div>
<div class="bl kai" style="top:129.2px">不点名女学生，也不关心女生们到底学得如何。</div>
<div class="bl kai" style="top:145.9px">因为是女人，所以不能进入图书馆，被保安拒之门</div>
<div class="dot" style="top:150.5px"></div>
<div class="bl kai" style="top:162.6px">外</div>
<div class="bl kai" style="top:179.3px">美国法律存在了几百年的痼疾——看似保护女性，</div>
<div class="dot" style="top:183.9px"></div>
<div class="bl kai" style="top:196.0px">实则是歧视，比如丈夫是家庭的主人，由他选择家</div>
<div class="bl kai" style="top:212.7px">庭的住处，女性必须无条件服从他；比如大部分州</div>
<div class="bl kai" style="top:229.4px">的雇主可以以怀孕为由，合法地解雇孕妇；甚至有</div>
<div class="bl kai" style="top:246.1px">十二个州的法律规定，丈夫不可因强奸妻子而被起</div>
<div class="bl kai" style="top:262.8px">诉<span style="letter-spacing:3.15px">.......</span></div></div>
<div class="t" style="left:9.3px;top:335.5px;color:#4a4a4a;font-weight:500;font-size:6.4px">7</div>
<svg class="a" style="left:8px;top:346px" width="6" height="6" viewBox="0 0 6 6"><path d="M3 0.4 l0.8 1.7 l1.8 0.2 l-1.3 1.3 l0.3 1.9 l-1.6 -0.9 l-1.6 0.9 l0.3 -1.9 l-1.3 -1.3 l1.8 -0.2 z" fill="#8a8a8a"/></svg>
<div class="a" style="left:17.5px;top:334px;width:109.5px;height:60.3px;background:#d9d8c4"></div>
<div class="a" style="left:21px;top:337.4px;width:103px;height:53.6px;background:#fdfdfb"></div>
<div class="a" style="left:21px;top:352.2px;width:68.5px;height:22px;background:#f5e7d6"></div>
<div class="a" style="left:28.5px;top:340.2px;width:2.3px;height:2.3px;border-radius:0.8px;background:#333"></div>
<div class="a" style="left:33.1px;top:340.2px;width:2.3px;height:2.3px;border-radius:0.8px;background:#333"></div>
<div class="a" style="left:37.7px;top:340.2px;width:2.3px;height:2.3px;border-radius:0.8px;background:#333"></div>
<div class="a" style="left:42.3px;top:340.2px;width:2.3px;height:2.3px;border-radius:0.8px;background:#333"></div>
<div class="a" style="left:29.5px;top:349.2px;width:57px;height:0.9px;background:repeating-linear-gradient(90deg,#777 0 1.1px,#c4c4c4 1.1px 1.7px,#949494 1.7px 2.6px,#d0d0d0 2.6px 3.1px)"></div><div class="a" style="left:29.5px;top:353.6px;width:26px;height:0.9px;background:repeating-linear-gradient(90deg,#777 0 1.1px,#c4c4c4 1.1px 1.7px,#949494 1.7px 2.6px,#d0d0d0 2.6px 3.1px)"></div>
<div class="a" style="left:29.5px;top:359.6px;width:57px;height:0.9px;background:repeating-linear-gradient(90deg,#777 0 1.1px,#c4c4c4 1.1px 1.7px,#949494 1.7px 2.6px,#d0d0d0 2.6px 3.1px)"></div><div class="a" style="left:29.5px;top:364.0px;width:57px;height:0.9px;background:repeating-linear-gradient(90deg,#777 0 1.1px,#c4c4c4 1.1px 1.7px,#949494 1.7px 2.6px,#d0d0d0 2.6px 3.1px)"></div><div class="a" style="left:29.5px;top:368.4px;width:8px;height:0.9px;background:repeating-linear-gradient(90deg,#777 0 1.1px,#c4c4c4 1.1px 1.7px,#949494 1.7px 2.6px,#d0d0d0 2.6px 3.1px)"></div>
<div class="a" style="left:29.5px;top:374.0px;width:57px;height:0.9px;background:repeating-linear-gradient(90deg,#777 0 1.1px,#c4c4c4 1.1px 1.7px,#949494 1.7px 2.6px,#d0d0d0 2.6px 3.1px)"></div><div class="a" style="left:29.5px;top:378.4px;width:57px;height:0.9px;background:repeating-linear-gradient(90deg,#777 0 1.1px,#c4c4c4 1.1px 1.7px,#949494 1.7px 2.6px,#d0d0d0 2.6px 3.1px)"></div><div class="a" style="left:29.5px;top:382.8px;width:57px;height:0.9px;background:repeating-linear-gradient(90deg,#777 0 1.1px,#c4c4c4 1.1px 1.7px,#949494 1.7px 2.6px,#d0d0d0 2.6px 3.1px)"></div><div class="a" style="left:29.5px;top:387.2px;width:10px;height:0.9px;background:repeating-linear-gradient(90deg,#777 0 1.1px,#c4c4c4 1.1px 1.7px,#949494 1.7px 2.6px,#d0d0d0 2.6px 3.1px)"></div>
<div class="a" style="left:90.2px;top:343px;width:31.4px;height:39.4px;background:#262626;overflow:hidden"><div class="a" style="left:0;top:0;width:31.4px;height:39.4px;filter:blur(0.7px)"><div class="a" style="left:0px;top:24px;width:8px;height:16px;background:#8a8a8a"></div><div class="a" style="left:11.5px;top:2.5px;width:15px;height:15px;border-radius:50%;background:#121212"></div><div class="a" style="left:14.2px;top:5px;width:9px;height:12px;border-radius:45%;background:radial-gradient(circle at 40% 45%,#cfcfcf,#9e9e9e 75%,#6f6f6f)"></div><div class="a" style="left:15.5px;top:9px;width:6.6px;height:1.1px;background:#444;opacity:0.8"></div><div class="a" style="left:16.5px;top:15px;width:5px;height:5px;background:#a2a2a2"></div><div class="a" style="left:3px;top:18.5px;width:25px;height:24px;border-radius:42% 42% 0 0;background:linear-gradient(90deg,#666,#7e7e7e 50%,#5a5a5a)"></div><div class="a" style="left:12px;top:33.5px;width:19px;height:6px;border-radius:1px;background:#e2e2e2"></div></div></div>
<div class="t" style="left:9.3px;top:406.5px;color:#4a4a4a;font-weight:500;font-size:6.4px">8</div>
<svg class="a" style="left:8px;top:417.5px" width="6" height="6" viewBox="0 0 6 6"><path d="M3 0.4 l0.8 1.7 l1.8 0.2 l-1.3 1.3 l0.3 1.9 l-1.6 -0.9 l-1.6 0.9 l0.3 -1.9 l-1.3 -1.3 l1.8 -0.2 z" fill="#8a8a8a"/></svg>
<div class="a" style="left:17.5px;top:404.4px;width:109.5px;height:18.3px;background:#d9d8c4"></div>
<div class="a" style="left:21px;top:407px;width:103px;height:15.7px;background:#fdfdfb"></div>
<div class="a" style="left:83.3px;top:411.6px;width:37px;height:11.1px;background:#262626;overflow:hidden"><div class="a" style="left:9px;top:1.5px;width:20px;height:14px;border-radius:50%;background:#3a3a3a;filter:blur(0.6px)"></div><div class="a" style="left:13px;top:3.5px;width:14px;height:12px;border-radius:50%;background:#a8a8a8;filter:blur(0.8px)"></div></div>
<!-- panel scrollbar -->
<div class="a" style="left:130.8px;top:160px;width:3.4px;height:65px;border-radius:1.7px;background:#a4a4a4"></div>
<svg class="a" style="left:63.2px;top:425.9px" width="10" height="10" viewBox="0 0 10 10"><path d="M5 1.2 V8.8 M1.2 5 H8.8" stroke="#3a3a3a" stroke-width="1"/></svg>

<!-- ===== slide ===== -->
<div class="a" style="left:169px;top:101.5px;width:560px;height:316px;background:#dcdcdc;filter:blur(1.4px)"></div>
<div class="a" style="left:170.2px;top:102.1px;width:557.4px;height:313.7px;background:#d8d7c2"></div>
<div class="a" style="left:184.1px;top:115.9px;width:529.9px;height:287.2px;background:#fdfdfb"></div>
<div class="a" style="left:184.5px;top:116px;width:529.5px;height:286.5px"><div class="a" style="left:-8.7px;top:82.2px;width:243.6px;height:141.2px;overflow:hidden"><svg width="243.6" height="141.2" viewBox="176 198 244 142" preserveAspectRatio="none" style="display:block">
<defs><filter id="mb" x="-5%" y="-5%" width="110%" height="110%"><feGaussianBlur stdDeviation="0.55"/></filter><filter id="mb2" x="0" y="0" width="100%" height="100%" color-interpolation-filters="sRGB"><feTurbulence type="fractalNoise" baseFrequency="0.22" numOctaves="2" seed="7" result="n"/><feColorMatrix in="n" type="matrix" values="0.6 0.6 0 0 -0.22  0.6 0.6 0 0 -0.22  0.6 0.6 0 0 -0.22  0 0 0 0 1"/><feComposite in2="SourceGraphic" operator="in"/><feGaussianBlur stdDeviation="0.5"/></filter><radialGradient id="mfg" cx="0.45" cy="0.42" r="0.62"><stop offset="0" stop-color="#e2e2e2"/><stop offset="0.6" stop-color="#c4c4c4"/><stop offset="1" stop-color="#8c8c8c"/></radialGradient><pattern id="mst" width="9" height="8" patternUnits="userSpaceOnUse"><rect width="9" height="8" fill="#5c5c5c"/><circle cx="2.5" cy="2.5" r="2" fill="#8e8e8e"/><circle cx="7" cy="6" r="1.8" fill="#2f2f2f"/><path d="M0 7 Q4 3 9 6" stroke="#a0a0a0" stroke-width="0.9" fill="none"/></pattern></defs>
<rect x="176" y="198" width="244" height="142" fill="#121212"/>
<g filter="url(#mb2)"><path d="M212 198 L356 198 L360 214 L352 232 L212 236 L206 214 Z" fill="#777"/></g>
<g filter="url(#mb)">
<path d="M249.2 254.5 L249.2 225.7 Q250.2 218.7 261.7 214.7 L272.7 214.7 Q284.2 218.7 285.2 225.7 L285.2 254.5 Z" fill="#303030"/>
<path d="M251.2 223.7 Q252.2 219.2 261.2 215.9" stroke="#fff" stroke-opacity="0.10" stroke-width="2" fill="none"/>
<path d="M283.2 223.7 Q282.2 219.2 273.2 215.9" stroke="#fff" stroke-opacity="0.10" stroke-width="2" fill="none"/>
<path d="M262.4 214.7 L267.2 230.7 L272.0 214.7 Z" fill="#000" fill-opacity="0.35"/>
<path d="M262.7 213.5 L271.7 213.5 L268.3 225.7 L266.1 225.7 Z" fill="#f0f0f0"/>
<path d="M262.0 214.1 L266.0 228.2 M272.4 214.1 L268.4 228.2" stroke="#fff" stroke-opacity="0.16" stroke-width="1.3" fill="none"/>
<path d="M266.3 215.9 L268.1 215.9 L268.2 225.7 L266.2 225.7 Z" fill="#151515"/>
<rect x="264.6" y="210.5" width="5.2" height="4.2" fill="#a8a8a8"/>
<ellipse cx="267.2" cy="206.5" rx="6.3" ry="1.9" fill="#a8a8a8"/>
<ellipse cx="267.2" cy="202.2" rx="5.6" ry="4.3" fill="#1c1c1c"/>
<ellipse cx="267.2" cy="207.3" rx="5.4" ry="6.9" fill="url(#mfg)"/>
<ellipse cx="265.1" cy="205.4" rx="1.25" ry="0.75" fill="#2a2a2a" opacity="0.78"/><ellipse cx="269.3" cy="205.4" rx="1.25" ry="0.75" fill="#2a2a2a" opacity="0.78"/>
<rect x="266.7" y="206.1" width="1.2" height="2.6" fill="#9a9a9a" opacity="0.7"/>
<rect x="265.3" y="209.8" width="3.8" height="0.9" fill="#5e5e5e" opacity="0.8"/>
<path d="M308.5 255.5 L308.5 226.7 Q309.5 219.7 321.0 215.7 L332.0 215.7 Q343.5 219.7 344.5 226.7 L344.5 255.5 Z" fill="#474747"/>
<path d="M310.5 224.7 Q311.5 220.2 320.5 216.9" stroke="#fff" stroke-opacity="0.10" stroke-width="2" fill="none"/>
<path d="M342.5 224.7 Q341.5 220.2 332.5 216.9" stroke="#fff" stroke-opacity="0.10" stroke-width="2" fill="none"/>
<path d="M321.7 215.7 L326.5 231.7 L331.3 215.7 Z" fill="#000" fill-opacity="0.35"/>
<path d="M322.0 214.5 L331.0 214.5 L327.6 226.7 L325.4 226.7 Z" fill="#f0f0f0"/>
<path d="M321.3 215.1 L325.3 229.2 M331.7 215.1 L327.7 229.2" stroke="#fff" stroke-opacity="0.16" stroke-width="1.3" fill="none"/>
<path d="M325.6 216.9 L327.4 216.9 L327.5 226.7 L325.5 226.7 Z" fill="#151515"/>
<rect x="323.9" y="211.5" width="5.2" height="4.2" fill="#a8a8a8"/>
<ellipse cx="326.5" cy="207.5" rx="6.3" ry="1.9" fill="#a8a8a8"/>
<ellipse cx="326.5" cy="203.2" rx="5.6" ry="4.3" fill="#1e1e1e"/>
<ellipse cx="326.5" cy="208.3" rx="5.4" ry="6.9" fill="url(#mfg)"/>
<rect x="322.0" y="205.5" width="9" height="1.9" rx="0.7" fill="#333" opacity="0.42"/>
<ellipse cx="324.4" cy="206.4" rx="1.25" ry="0.75" fill="#2a2a2a" opacity="0.78"/><ellipse cx="328.6" cy="206.4" rx="1.25" ry="0.75" fill="#2a2a2a" opacity="0.78"/>
<rect x="326.0" y="207.1" width="1.2" height="2.6" fill="#9a9a9a" opacity="0.7"/>
<rect x="324.6" y="210.8" width="3.8" height="0.9" fill="#5e5e5e" opacity="0.8"/>
<path d="M177.3 256.0 L177.3 227.2 Q178.3 220.2 189.8 216.2 L200.8 216.2 Q212.3 220.2 213.3 227.2 L213.3 256.0 Z" fill="#5a5a5a"/>
<path d="M179.3 225.2 Q180.3 220.7 189.3 217.4" stroke="#fff" stroke-opacity="0.10" stroke-width="2" fill="none"/>
<path d="M211.3 225.2 Q210.3 220.7 201.3 217.4" stroke="#fff" stroke-opacity="0.10" stroke-width="2" fill="none"/>
<path d="M190.5 216.2 L195.3 232.2 L200.1 216.2 Z" fill="#000" fill-opacity="0.35"/>
<path d="M190.8 215.0 L199.8 215.0 L196.4 227.2 L194.2 227.2 Z" fill="#f0f0f0"/>
<path d="M190.1 215.6 L194.1 229.7 M200.5 215.6 L196.5 229.7" stroke="#fff" stroke-opacity="0.16" stroke-width="1.3" fill="none"/>
<path d="M194.4 217.4 L196.2 217.4 L196.3 227.2 L194.3 227.2 Z" fill="#151515"/>
<rect x="192.7" y="212.0" width="5.2" height="4.2" fill="#a8a8a8"/>
<ellipse cx="195.3" cy="208.0" rx="6.3" ry="1.9" fill="#a8a8a8"/>
<ellipse cx="195.3" cy="203.7" rx="5.6" ry="4.3" fill="#2a2a2a"/>
<ellipse cx="195.3" cy="208.8" rx="5.4" ry="6.9" fill="url(#mfg)"/>
<rect x="190.8" y="206.0" width="9" height="1.9" rx="0.7" fill="#333" opacity="0.42"/>
<ellipse cx="193.2" cy="206.9" rx="1.25" ry="0.75" fill="#2a2a2a" opacity="0.78"/><ellipse cx="197.4" cy="206.9" rx="1.25" ry="0.75" fill="#2a2a2a" opacity="0.78"/>
<rect x="194.8" y="207.6" width="1.2" height="2.6" fill="#9a9a9a" opacity="0.7"/>
<rect x="193.4" y="211.3" width="3.8" height="0.9" fill="#5e5e5e" opacity="0.8"/>
<path d="M210.7 258.3 L210.7 229.5 Q211.7 222.5 223.2 218.5 L234.2 218.5 Q245.7 222.5 246.7 229.5 L246.7 258.3 Z" fill="#242424"/>
<path d="M212.7 227.5 Q213.7 223.0 222.7 219.7" stroke="#fff" stroke-opacity="0.10" stroke-width="2" fill="none"/>
<path d="M244.7 227.5 Q243.7 223.0 234.7 219.7" stroke="#fff" stroke-opacity="0.10" stroke-width="2" fill="none"/>
<path d="M223.9 218.5 L228.7 234.5 L233.5 218.5 Z" fill="#000" fill-opacity="0.35"/>
<path d="M224.2 217.3 L233.2 217.3 L229.8 229.5 L227.6 229.5 Z" fill="#f0f0f0"/>
<path d="M223.5 217.9 L227.5 232.0 M233.9 217.9 L229.9 232.0" stroke="#fff" stroke-opacity="0.16" stroke-width="1.3" fill="none"/>
<path d="M227.8 219.7 L229.6 219.7 L229.7 229.5 L227.7 229.5 Z" fill="#151515"/>
<rect x="226.1" y="214.3" width="5.2" height="4.2" fill="#a8a8a8"/>
<ellipse cx="228.7" cy="210.3" rx="6.3" ry="1.9" fill="#a8a8a8"/>
<ellipse cx="228.7" cy="206.0" rx="5.6" ry="4.3" fill="#8a8a8a"/>
<ellipse cx="228.7" cy="211.1" rx="5.4" ry="6.9" fill="url(#mfg)"/>
<rect x="224.2" y="208.3" width="9" height="1.9" rx="0.7" fill="#333" opacity="0.42"/>
<ellipse cx="226.6" cy="209.2" rx="1.25" ry="0.75" fill="#2a2a2a" opacity="0.78"/><ellipse cx="230.8" cy="209.2" rx="1.25" ry="0.75" fill="#2a2a2a" opacity="0.78"/>
<rect x="228.2" y="209.9" width="1.2" height="2.6" fill="#9a9a9a" opacity="0.7"/>
<rect x="226.8" y="213.6" width="3.8" height="0.9" fill="#5e5e5e" opacity="0.8"/>
<path d="M281.3 260.0 L281.3 231.2 Q282.3 224.2 293.8 220.2 L304.8 220.2 Q316.3 224.2 317.3 231.2 L317.3 260.0 Z" fill="#3a3a3a"/>
<path d="M283.3 229.2 Q284.3 224.7 293.3 221.4" stroke="#fff" stroke-opacity="0.10" stroke-width="2" fill="none"/>
<path d="M315.3 229.2 Q314.3 224.7 305.3 221.4" stroke="#fff" stroke-opacity="0.10" stroke-width="2" fill="none"/>
<path d="M294.5 220.2 L299.3 236.2 L304.1 220.2 Z" fill="#000" fill-opacity="0.35"/>
<path d="M294.8 219.0 L303.8 219.0 L300.4 231.2 L298.2 231.2 Z" fill="#f0f0f0"/>
<path d="M294.1 219.6 L298.1 233.7 M304.5 219.6 L300.5 233.7" stroke="#fff" stroke-opacity="0.16" stroke-width="1.3" fill="none"/>
<path d="M298.4 221.4 L300.2 221.4 L300.3 231.2 L298.3 231.2 Z" fill="#151515"/>
<rect x="296.7" y="216.0" width="5.2" height="4.2" fill="#a8a8a8"/>
<ellipse cx="299.3" cy="212.0" rx="6.3" ry="1.9" fill="#a8a8a8"/>
<ellipse cx="299.3" cy="207.7" rx="5.6" ry="4.3" fill="#171717"/>
<ellipse cx="299.3" cy="212.8" rx="5.4" ry="6.9" fill="url(#mfg)"/>
<ellipse cx="297.2" cy="210.9" rx="1.25" ry="0.75" fill="#2a2a2a" opacity="0.78"/><ellipse cx="301.4" cy="210.9" rx="1.25" ry="0.75" fill="#2a2a2a" opacity="0.78"/>
<rect x="298.8" y="211.6" width="1.2" height="2.6" fill="#9a9a9a" opacity="0.7"/>
<rect x="297.4" y="215.3" width="3.8" height="0.9" fill="#5e5e5e" opacity="0.8"/>
<path d="M338.5 260.0 L338.5 231.2 Q339.5 224.2 351.0 220.2 L362.0 220.2 Q373.5 224.2 374.5 231.2 L374.5 260.0 Z" fill="#666"/>
<path d="M340.5 229.2 Q341.5 224.7 350.5 221.4" stroke="#fff" stroke-opacity="0.10" stroke-width="2" fill="none"/>
<path d="M372.5 229.2 Q371.5 224.7 362.5 221.4" stroke="#fff" stroke-opacity="0.10" stroke-width="2" fill="none"/>
<path d="M351.7 220.2 L356.5 236.2 L361.3 220.2 Z" fill="#000" fill-opacity="0.35"/>
<path d="M352.0 219.0 L361.0 219.0 L357.6 231.2 L355.4 231.2 Z" fill="#f0f0f0"/>
<path d="M351.3 219.6 L355.3 233.7 M361.7 219.6 L357.7 233.7" stroke="#fff" stroke-opacity="0.16" stroke-width="1.3" fill="none"/>
<path d="M355.6 221.4 L357.4 221.4 L357.5 231.2 L355.5 231.2 Z" fill="#151515"/>
<rect x="353.9" y="216.0" width="5.2" height="4.2" fill="#a8a8a8"/>
<ellipse cx="356.5" cy="212.0" rx="6.3" ry="1.9" fill="#a8a8a8"/>
<ellipse cx="356.5" cy="207.7" rx="5.6" ry="4.3" fill="#222"/>
<ellipse cx="356.5" cy="212.8" rx="5.4" ry="6.9" fill="url(#mfg)"/>
<rect x="352.0" y="210.0" width="9" height="1.9" rx="0.7" fill="#333" opacity="0.42"/>
<ellipse cx="354.4" cy="210.9" rx="1.25" ry="0.75" fill="#2a2a2a" opacity="0.78"/><ellipse cx="358.6" cy="210.9" rx="1.25" ry="0.75" fill="#2a2a2a" opacity="0.78"/>
<rect x="356.0" y="211.6" width="1.2" height="2.6" fill="#9a9a9a" opacity="0.7"/>
<rect x="354.6" y="215.3" width="3.8" height="0.9" fill="#5e5e5e" opacity="0.8"/>
<path d="M378.5 298.0 L378.5 245.2 Q379.5 238.2 393.0 234.2 L404.0 234.2 Q417.5 238.2 418.5 245.2 L418.5 298.0 Z" fill="#353535"/>
<path d="M380.5 243.2 Q381.5 238.7 392.5 235.4" stroke="#fff" stroke-opacity="0.10" stroke-width="2" fill="none"/>
<path d="M416.5 243.2 Q415.5 238.7 404.5 235.4" stroke="#fff" stroke-opacity="0.10" stroke-width="2" fill="none"/>
<path d="M393.7 234.2 L398.5 252.2 L403.3 234.2 Z" fill="#000" fill-opacity="0.35"/>
<path d="M394.0 233.0 L403.0 233.0 L399.6 247.2 L397.4 247.2 Z" fill="#f0f0f0"/>
<path d="M393.3 233.6 L397.3 249.7 M403.7 233.6 L399.7 249.7" stroke="#fff" stroke-opacity="0.16" stroke-width="1.3" fill="none"/>
<path d="M397.6 235.4 L399.4 235.4 L399.5 247.2 L397.5 247.2 Z" fill="#151515"/>
<rect x="395.9" y="230.0" width="5.2" height="4.2" fill="#a8a8a8"/>
<ellipse cx="398.5" cy="226.0" rx="6.3" ry="1.9" fill="#a8a8a8"/>
<ellipse cx="398.5" cy="221.7" rx="5.6" ry="4.3" fill="#2a2a2a"/>
<ellipse cx="398.5" cy="226.8" rx="5.4" ry="6.9" fill="url(#mfg)"/>
<ellipse cx="396.4" cy="224.9" rx="1.25" ry="0.75" fill="#2a2a2a" opacity="0.78"/><ellipse cx="400.6" cy="224.9" rx="1.25" ry="0.75" fill="#2a2a2a" opacity="0.78"/>
<rect x="398.0" y="225.6" width="1.2" height="2.6" fill="#9a9a9a" opacity="0.7"/>
<rect x="396.6" y="229.3" width="3.8" height="0.9" fill="#5e5e5e" opacity="0.8"/>
<path d="M163.3 277.3 L163.3 248.5 Q164.3 241.5 175.8 237.5 L186.8 237.5 Q198.3 241.5 199.3 248.5 L199.3 277.3 Z" fill="#4c4c4c"/>
<path d="M165.3 246.5 Q166.3 242.0 175.3 238.7" stroke="#fff" stroke-opacity="0.10" stroke-width="2" fill="none"/>
<path d="M197.3 246.5 Q196.3 242.0 187.3 238.7" stroke="#fff" stroke-opacity="0.10" stroke-width="2" fill="none"/>
<path d="M176.5 237.5 L181.3 256.5 L186.1 237.5 Z" fill="#000" fill-opacity="0.35"/>
<path d="M176.8 236.3 L185.8 236.3 L182.4 251.5 L180.2 251.5 Z" fill="#f0f0f0"/>
<path d="M176.1 236.9 L180.1 254.0 M186.5 236.9 L182.5 254.0" stroke="#fff" stroke-opacity="0.16" stroke-width="1.3" fill="none"/>
<path d="M180.4 238.7 L182.2 238.7 L182.3 251.5 L180.3 251.5 Z" fill="#151515"/>
<rect x="178.7" y="233.3" width="5.2" height="4.2" fill="#a8a8a8"/>
<ellipse cx="181.3" cy="229.3" rx="6.3" ry="1.9" fill="#a8a8a8"/>
<ellipse cx="181.3" cy="225.0" rx="5.6" ry="4.3" fill="#1c1c1c"/>
<ellipse cx="181.3" cy="230.1" rx="5.4" ry="6.9" fill="url(#mfg)"/>
<rect x="176.8" y="227.3" width="9" height="1.9" rx="0.7" fill="#333" opacity="0.42"/>
<ellipse cx="179.2" cy="228.2" rx="1.25" ry="0.75" fill="#2a2a2a" opacity="0.78"/><ellipse cx="183.4" cy="228.2" rx="1.25" ry="0.75" fill="#2a2a2a" opacity="0.78"/>
<rect x="180.8" y="228.9" width="1.2" height="2.6" fill="#9a9a9a" opacity="0.7"/>
<rect x="179.4" y="232.6" width="3.8" height="0.9" fill="#5e5e5e" opacity="0.8"/>
<path d="M205.0 283.5 L205.0 254.7 Q206.0 247.7 217.5 243.7 L228.5 243.7 Q240.0 247.7 241.0 254.7 L241.0 283.5 Z" fill="#262626"/>
<path d="M207.0 252.7 Q208.0 248.2 217.0 244.9" stroke="#fff" stroke-opacity="0.10" stroke-width="2" fill="none"/>
<path d="M239.0 252.7 Q238.0 248.2 229.0 244.9" stroke="#fff" stroke-opacity="0.10" stroke-width="2" fill="none"/>
<path d="M218.2 243.7 L223.0 259.7 L227.8 243.7 Z" fill="#000" fill-opacity="0.35"/>
<path d="M218.5 242.5 L227.5 242.5 L224.1 254.7 L221.9 254.7 Z" fill="#f0f0f0"/>
<path d="M217.8 243.1 L221.8 257.2 M228.2 243.1 L224.2 257.2" stroke="#fff" stroke-opacity="0.16" stroke-width="1.3" fill="none"/>
<path d="M222.1 244.9 L223.9 244.9 L224.0 254.7 L222.0 254.7 Z" fill="#151515"/>
<rect x="220.4" y="239.5" width="5.2" height="4.2" fill="#a8a8a8"/>
<ellipse cx="223.0" cy="235.5" rx="6.3" ry="1.9" fill="#a8a8a8"/>
<ellipse cx="223.0" cy="231.2" rx="5.6" ry="4.3" fill="#4a4a4a"/>
<ellipse cx="223.0" cy="236.3" rx="5.4" ry="6.9" fill="url(#mfg)"/>
<ellipse cx="220.9" cy="234.4" rx="1.25" ry="0.75" fill="#2a2a2a" opacity="0.78"/><ellipse cx="225.1" cy="234.4" rx="1.25" ry="0.75" fill="#2a2a2a" opacity="0.78"/>
<rect x="222.5" y="235.1" width="1.2" height="2.6" fill="#9a9a9a" opacity="0.7"/>
<rect x="221.1" y="238.8" width="3.8" height="0.9" fill="#5e5e5e" opacity="0.8"/>
<path d="M303.5 284.0 L303.5 255.2 Q304.5 248.2 316.0 244.2 L327.0 244.2 Q338.5 248.2 339.5 255.2 L339.5 284.0 Z" fill="#9a9a9a"/>
<path d="M305.5 253.2 Q306.5 248.7 315.5 245.4" stroke="#fff" stroke-opacity="0.10" stroke-width="2" fill="none"/>
<path d="M337.5 253.2 Q336.5 248.7 327.5 245.4" stroke="#fff" stroke-opacity="0.10" stroke-width="2" fill="none"/>
<path d="M316.7 244.2 L321.5 262.2 L326.3 244.2 Z" fill="#000" fill-opacity="0.35"/>
<path d="M317.0 243.0 L326.0 243.0 L322.6 257.2 L320.4 257.2 Z" fill="#f0f0f0"/>
<path d="M316.3 243.6 L320.3 259.7 M326.7 243.6 L322.7 259.7" stroke="#fff" stroke-opacity="0.16" stroke-width="1.3" fill="none"/>
<path d="M320.6 245.4 L322.4 245.4 L322.5 257.2 L320.5 257.2 Z" fill="#151515"/>
<rect x="318.9" y="240.0" width="5.2" height="4.2" fill="#a8a8a8"/>
<ellipse cx="321.5" cy="236.0" rx="6.3" ry="1.9" fill="#a8a8a8"/>
<ellipse cx="321.5" cy="231.7" rx="5.6" ry="4.3" fill="#1c1c1c"/>
<ellipse cx="321.5" cy="236.8" rx="5.4" ry="6.9" fill="url(#mfg)"/>
<ellipse cx="319.4" cy="234.9" rx="1.25" ry="0.75" fill="#2a2a2a" opacity="0.78"/><ellipse cx="323.6" cy="234.9" rx="1.25" ry="0.75" fill="#2a2a2a" opacity="0.78"/>
<rect x="321.0" y="235.6" width="1.2" height="2.6" fill="#9a9a9a" opacity="0.7"/>
<rect x="319.6" y="239.3" width="3.8" height="0.9" fill="#5e5e5e" opacity="0.8"/>
<path d="M235.5 285.0 L235.5 256.2 Q236.5 249.2 248.0 245.2 L259.0 245.2 Q270.5 249.2 271.5 256.2 L271.5 285.0 Z" fill="#2a2a2a"/>
<path d="M237.5 254.2 Q238.5 249.7 247.5 246.4" stroke="#fff" stroke-opacity="0.10" stroke-width="2" fill="none"/>
<path d="M269.5 254.2 Q268.5 249.7 259.5 246.4" stroke="#fff" stroke-opacity="0.10" stroke-width="2" fill="none"/>
<path d="M248.7 245.2 L253.5 261.2 L258.3 245.2 Z" fill="#000" fill-opacity="0.35"/>
<path d="M249.0 244.0 L258.0 244.0 L254.6 256.2 L252.4 256.2 Z" fill="#f0f0f0"/>
<path d="M248.3 244.6 L252.3 258.7 M258.7 244.6 L254.7 258.7" stroke="#fff" stroke-opacity="0.16" stroke-width="1.3" fill="none"/>
<path d="M252.6 246.4 L254.4 246.4 L254.5 256.2 L252.5 256.2 Z" fill="#151515"/>
<rect x="250.9" y="241.0" width="5.2" height="4.2" fill="#a8a8a8"/>
<ellipse cx="253.5" cy="237.0" rx="6.3" ry="1.9" fill="#a8a8a8"/>
<ellipse cx="253.5" cy="232.7" rx="5.6" ry="4.3" fill="#161616"/>
<ellipse cx="253.5" cy="237.8" rx="5.4" ry="6.9" fill="url(#mfg)"/>
<rect x="249.0" y="235.0" width="9" height="1.9" rx="0.7" fill="#333" opacity="0.42"/>
<ellipse cx="251.4" cy="235.9" rx="1.25" ry="0.75" fill="#2a2a2a" opacity="0.78"/><ellipse cx="255.6" cy="235.9" rx="1.25" ry="0.75" fill="#2a2a2a" opacity="0.78"/>
<rect x="253.0" y="236.6" width="1.2" height="2.6" fill="#9a9a9a" opacity="0.7"/>
<rect x="251.6" y="240.3" width="3.8" height="0.9" fill="#5e5e5e" opacity="0.8"/>
<path d="M326.8 285.2 L326.8 256.4 Q327.8 249.4 339.3 245.4 L350.3 245.4 Q361.8 249.4 362.8 256.4 L362.8 285.2 Z" fill="#1f1f1f"/>
<path d="M328.8 254.4 Q329.8 249.9 338.8 246.6" stroke="#fff" stroke-opacity="0.10" stroke-width="2" fill="none"/>
<path d="M360.8 254.4 Q359.8 249.9 350.8 246.6" stroke="#fff" stroke-opacity="0.10" stroke-width="2" fill="none"/>
<path d="M340.0 245.4 L344.8 260.4 L349.6 245.4 Z" fill="#000" fill-opacity="0.35"/>
<path d="M340.3 244.2 L349.3 244.2 L345.9 255.4 L343.7 255.4 Z" fill="#f0f0f0"/>
<path d="M339.6 244.8 L343.6 257.9 M350.0 244.8 L346.0 257.9" stroke="#fff" stroke-opacity="0.16" stroke-width="1.3" fill="none"/>
<path d="M343.9 246.6 L345.7 246.6 L345.8 255.4 L343.8 255.4 Z" fill="#151515"/>
<rect x="342.2" y="241.2" width="5.2" height="4.2" fill="#a8a8a8"/>
<ellipse cx="344.8" cy="237.2" rx="6.3" ry="1.9" fill="#a8a8a8"/>
<ellipse cx="344.8" cy="232.9" rx="5.6" ry="4.3" fill="#141414"/>
<ellipse cx="344.8" cy="238.0" rx="5.4" ry="6.9" fill="url(#mfg)"/>
<ellipse cx="342.7" cy="236.1" rx="1.25" ry="0.75" fill="#2a2a2a" opacity="0.78"/><ellipse cx="346.9" cy="236.1" rx="1.25" ry="0.75" fill="#2a2a2a" opacity="0.78"/>
<rect x="344.3" y="236.8" width="1.2" height="2.6" fill="#9a9a9a" opacity="0.7"/>
<rect x="342.9" y="240.5" width="3.8" height="0.9" fill="#5e5e5e" opacity="0.8"/>
<path d="M266.2 286.0 L266.2 257.2 Q267.2 250.2 278.7 246.2 L289.7 246.2 Q301.2 250.2 302.2 257.2 L302.2 286.0 Z" fill="#585858"/>
<path d="M268.2 255.2 Q269.2 250.7 278.2 247.4" stroke="#fff" stroke-opacity="0.10" stroke-width="2" fill="none"/>
<path d="M300.2 255.2 Q299.2 250.7 290.2 247.4" stroke="#fff" stroke-opacity="0.10" stroke-width="2" fill="none"/>
<path d="M279.4 246.2 L284.2 263.2 L289.0 246.2 Z" fill="#000" fill-opacity="0.35"/>
<path d="M279.7 245.0 L288.7 245.0 L285.3 258.2 L283.1 258.2 Z" fill="#f0f0f0"/>
<path d="M279.0 245.6 L283.0 260.7 M289.4 245.6 L285.4 260.7" stroke="#fff" stroke-opacity="0.16" stroke-width="1.3" fill="none"/>
<path d="M283.3 247.4 L285.1 247.4 L285.2 258.2 L283.2 258.2 Z" fill="#151515"/>
<rect x="281.6" y="242.0" width="5.2" height="4.2" fill="#a8a8a8"/>
<ellipse cx="284.2" cy="238.0" rx="6.3" ry="1.9" fill="#a8a8a8"/>
<ellipse cx="284.2" cy="233.7" rx="5.6" ry="4.3" fill="#3a3a3a"/>
<ellipse cx="284.2" cy="238.8" rx="5.4" ry="6.9" fill="url(#mfg)"/>
<ellipse cx="282.1" cy="236.9" rx="1.25" ry="0.75" fill="#2a2a2a" opacity="0.78"/><ellipse cx="286.3" cy="236.9" rx="1.25" ry="0.75" fill="#2a2a2a" opacity="0.78"/>
<rect x="283.7" y="237.6" width="1.2" height="2.6" fill="#9a9a9a" opacity="0.7"/>
<rect x="282.3" y="241.3" width="3.8" height="0.9" fill="#5e5e5e" opacity="0.8"/>
<path d="M358.3 288.3 L358.3 267.5 Q359.3 260.5 365.8 256.5 L376.8 256.5 Q383.3 260.5 384.3 267.5 L384.3 288.3 Z" fill="#141414"/>
<path d="M360.3 265.5 Q361.3 261.0 365.3 257.7" stroke="#fff" stroke-opacity="0.10" stroke-width="2" fill="none"/>
<path d="M382.3 265.5 Q381.3 261.0 377.3 257.7" stroke="#fff" stroke-opacity="0.10" stroke-width="2" fill="none"/>
<ellipse cx="371.3" cy="247.8" rx="7.8" ry="9" fill="#1d1d1d"/>
<ellipse cx="371.6" cy="249.3" rx="4.7" ry="5.9" fill="url(#mfg)"/>
<rect x="368.5" y="247.7" width="5.6" height="1.1" fill="#444" opacity="0.8"/>
<rect x="369.9" y="251.7" width="2.8" height="0.9" fill="#555" opacity="0.8"/>
<path d="M366.3 256.9 Q371.3 254.9 376.3 256.9 L374.9 259.3 L371.3 257.5 L367.7 259.3 Z" fill="#f0f0f0"/>
<path d="M321.0 310.5 L321.0 283.7 Q322.0 276.7 333.5 272.7 L344.5 272.7 Q356.0 276.7 357.0 283.7 L357.0 310.5 Z" fill="#727272"/>
<path d="M323.0 281.7 Q324.0 277.2 333.0 273.9" stroke="#fff" stroke-opacity="0.10" stroke-width="2" fill="none"/>
<path d="M355.0 281.7 Q354.0 277.2 345.0 273.9" stroke="#fff" stroke-opacity="0.10" stroke-width="2" fill="none"/>
<path d="M334.2 272.7 L339.0 291.7 L343.8 272.7 Z" fill="#000" fill-opacity="0.35"/>
<path d="M334.5 271.5 L343.5 271.5 L340.1 286.7 L337.9 286.7 Z" fill="#f0f0f0"/>
<path d="M333.8 272.1 L337.8 289.2 M344.2 272.1 L340.2 289.2" stroke="#fff" stroke-opacity="0.16" stroke-width="1.3" fill="none"/>
<path d="M338.1 273.9 L339.9 273.9 L340.0 286.7 L338.0 286.7 Z" fill="#151515"/>
<rect x="336.4" y="268.5" width="5.2" height="4.2" fill="#a8a8a8"/>
<ellipse cx="339.0" cy="264.5" rx="6.3" ry="1.9" fill="#a8a8a8"/>
<ellipse cx="339.0" cy="260.2" rx="5.6" ry="4.3" fill="#1c1c1c"/>
<ellipse cx="339.0" cy="265.3" rx="5.4" ry="6.9" fill="url(#mfg)"/>
<ellipse cx="336.9" cy="263.4" rx="1.25" ry="0.75" fill="#2a2a2a" opacity="0.78"/><ellipse cx="341.1" cy="263.4" rx="1.25" ry="0.75" fill="#2a2a2a" opacity="0.78"/>
<rect x="338.5" y="264.1" width="1.2" height="2.6" fill="#9a9a9a" opacity="0.7"/>
<rect x="337.1" y="267.8" width="3.8" height="0.9" fill="#5e5e5e" opacity="0.8"/>
<path d="M322.0 308.5 h34 v30 h-34 z" fill="#1a1a1a"/>
<path d="M324.0 310.5 h12 v28 h-12 z M342.0 310.5 h12 v28 h-12 z" fill="#262626"/>
<path d="M242.5 314.0 L242.5 287.2 Q243.5 280.2 255.0 276.2 L266.0 276.2 Q277.5 280.2 278.5 287.2 L278.5 314.0 Z" fill="#2c2c2c"/>
<path d="M244.5 285.2 Q245.5 280.7 254.5 277.4" stroke="#fff" stroke-opacity="0.10" stroke-width="2" fill="none"/>
<path d="M276.5 285.2 Q275.5 280.7 266.5 277.4" stroke="#fff" stroke-opacity="0.10" stroke-width="2" fill="none"/>
<path d="M255.7 276.2 L260.5 294.2 L265.3 276.2 Z" fill="#000" fill-opacity="0.35"/>
<path d="M256.0 275.0 L265.0 275.0 L261.6 289.2 L259.4 289.2 Z" fill="#f0f0f0"/>
<path d="M255.3 275.6 L259.3 291.7 M265.7 275.6 L261.7 291.7" stroke="#fff" stroke-opacity="0.16" stroke-width="1.3" fill="none"/>
<path d="M259.6 277.4 L261.4 277.4 L261.5 289.2 L259.5 289.2 Z" fill="#151515"/>
<rect x="257.9" y="272.0" width="5.2" height="4.2" fill="#a8a8a8"/>
<ellipse cx="260.5" cy="268.0" rx="6.3" ry="1.9" fill="#a8a8a8"/>
<ellipse cx="260.5" cy="263.7" rx="5.6" ry="4.3" fill="#1c1c1c"/>
<ellipse cx="260.5" cy="268.8" rx="5.4" ry="6.9" fill="url(#mfg)"/>
<rect x="256.0" y="266.0" width="9" height="1.9" rx="0.7" fill="#333" opacity="0.42"/>
<ellipse cx="258.4" cy="266.9" rx="1.25" ry="0.75" fill="#2a2a2a" opacity="0.78"/><ellipse cx="262.6" cy="266.9" rx="1.25" ry="0.75" fill="#2a2a2a" opacity="0.78"/>
<rect x="260.0" y="267.6" width="1.2" height="2.6" fill="#9a9a9a" opacity="0.7"/>
<rect x="258.6" y="271.3" width="3.8" height="0.9" fill="#5e5e5e" opacity="0.8"/>
<path d="M243.5 312.0 h34 v30 h-34 z" fill="#1a1a1a"/>
<path d="M245.5 314.0 h12 v28 h-12 z M263.5 314.0 h12 v28 h-12 z" fill="#262626"/>
<path d="M281.0 316.5 L281.0 289.7 Q282.0 282.7 293.5 278.7 L304.5 278.7 Q316.0 282.7 317.0 289.7 L317.0 316.5 Z" fill="#8c8c8c"/>
<path d="M283.0 287.7 Q284.0 283.2 293.0 279.9" stroke="#fff" stroke-opacity="0.10" stroke-width="2" fill="none"/>
<path d="M315.0 287.7 Q314.0 283.2 305.0 279.9" stroke="#fff" stroke-opacity="0.10" stroke-width="2" fill="none"/>
<path d="M294.2 278.7 L299.0 296.7 L303.8 278.7 Z" fill="#000" fill-opacity="0.35"/>
<path d="M294.5 277.5 L303.5 277.5 L300.1 291.7 L297.9 291.7 Z" fill="#f0f0f0"/>
<path d="M293.8 278.1 L297.8 294.2 M304.2 278.1 L300.2 294.2" stroke="#fff" stroke-opacity="0.16" stroke-width="1.3" fill="none"/>
<path d="M298.1 279.9 L299.9 279.9 L300.0 291.7 L298.0 291.7 Z" fill="#151515"/>
<rect x="296.4" y="274.5" width="5.2" height="4.2" fill="#a8a8a8"/>
<ellipse cx="299.0" cy="270.5" rx="6.3" ry="1.9" fill="#a8a8a8"/>
<ellipse cx="299.0" cy="266.2" rx="5.6" ry="4.3" fill="#1c1c1c"/>
<ellipse cx="299.0" cy="271.3" rx="5.4" ry="6.9" fill="url(#mfg)"/>
<rect x="294.5" y="268.5" width="9" height="1.9" rx="0.7" fill="#333" opacity="0.42"/>
<ellipse cx="296.9" cy="269.4" rx="1.25" ry="0.75" fill="#2a2a2a" opacity="0.78"/><ellipse cx="301.1" cy="269.4" rx="1.25" ry="0.75" fill="#2a2a2a" opacity="0.78"/>
<rect x="298.5" y="270.1" width="1.2" height="2.6" fill="#9a9a9a" opacity="0.7"/>
<rect x="297.1" y="273.8" width="3.8" height="0.9" fill="#5e5e5e" opacity="0.8"/>
<path d="M282.0 314.5 h34 v30 h-34 z" fill="#1a1a1a"/>
<path d="M284.0 316.5 h12 v28 h-12 z M302.0 316.5 h12 v28 h-12 z" fill="#262626"/>
<path d="M207.0 319.0 L207.0 292.2 Q208.0 285.2 219.5 281.2 L230.5 281.2 Q242.0 285.2 243.0 292.2 L243.0 319.0 Z" fill="#303030"/>
<path d="M209.0 290.2 Q210.0 285.7 219.0 282.4" stroke="#fff" stroke-opacity="0.10" stroke-width="2" fill="none"/>
<path d="M241.0 290.2 Q240.0 285.7 231.0 282.4" stroke="#fff" stroke-opacity="0.10" stroke-width="2" fill="none"/>
<path d="M220.2 281.2 L225.0 298.2 L229.8 281.2 Z" fill="#000" fill-opacity="0.35"/>
<path d="M220.5 280.0 L229.5 280.0 L226.1 293.2 L223.9 293.2 Z" fill="#f0f0f0"/>
<path d="M219.8 280.6 L223.8 295.7 M230.2 280.6 L226.2 295.7" stroke="#fff" stroke-opacity="0.16" stroke-width="1.3" fill="none"/>
<path d="M224.1 282.4 L225.9 282.4 L226.0 293.2 L224.0 293.2 Z" fill="#151515"/>
<rect x="222.4" y="277.0" width="5.2" height="4.2" fill="#a8a8a8"/>
<ellipse cx="225.0" cy="273.0" rx="6.3" ry="1.9" fill="#a8a8a8"/>
<ellipse cx="225.0" cy="268.7" rx="5.6" ry="4.3" fill="#4a4a4a"/>
<ellipse cx="225.0" cy="273.8" rx="5.4" ry="6.9" fill="url(#mfg)"/>
<rect x="220.5" y="271.0" width="9" height="1.9" rx="0.7" fill="#333" opacity="0.42"/>
<ellipse cx="222.9" cy="271.9" rx="1.25" ry="0.75" fill="#2a2a2a" opacity="0.78"/><ellipse cx="227.1" cy="271.9" rx="1.25" ry="0.75" fill="#2a2a2a" opacity="0.78"/>
<rect x="224.5" y="272.6" width="1.2" height="2.6" fill="#9a9a9a" opacity="0.7"/>
<rect x="223.1" y="276.3" width="3.8" height="0.9" fill="#5e5e5e" opacity="0.8"/>
<path d="M208.0 317.0 h34 v30 h-34 z" fill="#1a1a1a"/>
<path d="M210.0 319.0 h12 v28 h-12 z M228.0 319.0 h12 v28 h-12 z" fill="#262626"/>
<path d="M352.5 320.4 L352.5 293.6 Q353.5 286.6 365.0 282.6 L376.0 282.6 Q387.5 286.6 388.5 293.6 L388.5 320.4 Z" fill="#2c2c2c"/>
<path d="M354.5 291.6 Q355.5 287.1 364.5 283.8" stroke="#fff" stroke-opacity="0.10" stroke-width="2" fill="none"/>
<path d="M386.5 291.6 Q385.5 287.1 376.5 283.8" stroke="#fff" stroke-opacity="0.10" stroke-width="2" fill="none"/>
<path d="M365.7 282.6 L370.5 297.6 L375.3 282.6 Z" fill="#000" fill-opacity="0.35"/>
<path d="M366.0 281.4 L375.0 281.4 L371.6 292.6 L369.4 292.6 Z" fill="#f0f0f0"/>
<path d="M365.3 282.0 L369.3 295.1 M375.7 282.0 L371.7 295.1" stroke="#fff" stroke-opacity="0.16" stroke-width="1.3" fill="none"/>
<path d="M369.6 283.8 L371.4 283.8 L371.5 292.6 L369.5 292.6 Z" fill="#151515"/>
<rect x="367.9" y="278.4" width="5.2" height="4.2" fill="#a8a8a8"/>
<ellipse cx="370.5" cy="274.4" rx="6.3" ry="1.9" fill="#a8a8a8"/>
<ellipse cx="370.5" cy="270.1" rx="5.6" ry="4.3" fill="#1c1c1c"/>
<ellipse cx="370.5" cy="275.2" rx="5.4" ry="6.9" fill="url(#mfg)"/>
<rect x="366.0" y="272.4" width="9" height="1.9" rx="0.7" fill="#333" opacity="0.42"/>
<ellipse cx="368.4" cy="273.3" rx="1.25" ry="0.75" fill="#2a2a2a" opacity="0.78"/><ellipse cx="372.6" cy="273.3" rx="1.25" ry="0.75" fill="#2a2a2a" opacity="0.78"/>
<rect x="370.0" y="274.0" width="1.2" height="2.6" fill="#9a9a9a" opacity="0.7"/>
<rect x="368.6" y="277.7" width="3.8" height="0.9" fill="#5e5e5e" opacity="0.8"/>
<path d="M353.5 318.4 h34 v30 h-34 z" fill="#1a1a1a"/>
<path d="M355.5 320.4 h12 v28 h-12 z M373.5 320.4 h12 v28 h-12 z" fill="#262626"/>
<path d="M172.8 320.5 L172.8 293.7 Q173.8 286.7 185.3 282.7 L196.3 282.7 Q207.8 286.7 208.8 293.7 L208.8 320.5 Z" fill="#3a3a3a"/>
<path d="M174.8 291.7 Q175.8 287.2 184.8 283.9" stroke="#fff" stroke-opacity="0.10" stroke-width="2" fill="none"/>
<path d="M206.8 291.7 Q205.8 287.2 196.8 283.9" stroke="#fff" stroke-opacity="0.10" stroke-width="2" fill="none"/>
<path d="M186.0 282.7 L190.8 304.7 L195.6 282.7 Z" fill="#000" fill-opacity="0.35"/>
<path d="M186.3 281.5 L195.3 281.5 L191.9 299.7 L189.7 299.7 Z" fill="#f0f0f0"/>
<path d="M185.6 282.1 L189.6 302.2 M196.0 282.1 L192.0 302.2" stroke="#fff" stroke-opacity="0.16" stroke-width="1.3" fill="none"/>
<path d="M189.9 283.9 L191.7 283.9 L191.8 299.7 L189.8 299.7 Z" fill="#151515"/>
<rect x="188.2" y="278.5" width="5.2" height="4.2" fill="#a8a8a8"/>
<ellipse cx="190.8" cy="274.5" rx="6.3" ry="1.9" fill="#a8a8a8"/>
<ellipse cx="190.8" cy="270.2" rx="5.6" ry="4.3" fill="#141414"/>
<ellipse cx="190.8" cy="275.3" rx="5.4" ry="6.9" fill="url(#mfg)"/>
<ellipse cx="188.7" cy="273.4" rx="1.25" ry="0.75" fill="#2a2a2a" opacity="0.78"/><ellipse cx="192.9" cy="273.4" rx="1.25" ry="0.75" fill="#2a2a2a" opacity="0.78"/>
<rect x="190.3" y="274.1" width="1.2" height="2.6" fill="#9a9a9a" opacity="0.7"/>
<rect x="188.9" y="277.8" width="3.8" height="0.9" fill="#5e5e5e" opacity="0.8"/>
<path d="M173.8 318.5 h34 v30 h-34 z" fill="#1a1a1a"/>
<path d="M175.8 320.5 h12 v28 h-12 z M193.8 320.5 h12 v28 h-12 z" fill="#262626"/>
<path d="M341.4 349.2 L341.4 338.4 Q342.4 331.4 352.9 327.4 L363.9 327.4 Q374.4 331.4 375.4 338.4 L375.4 349.2 Z" fill="#2c2c2c"/>
<path d="M343.4 336.4 Q344.4 331.9 352.4 328.6" stroke="#fff" stroke-opacity="0.10" stroke-width="2" fill="none"/>
<path d="M373.4 336.4 Q372.4 331.9 364.4 328.6" stroke="#fff" stroke-opacity="0.10" stroke-width="2" fill="none"/>
<path d="M353.6 327.4 L358.4 339.4 L363.2 327.4 Z" fill="#000" fill-opacity="0.35"/>
<path d="M353.9 326.2 L362.9 326.2 L359.5 334.4 L357.3 334.4 Z" fill="#f0f0f0"/>
<path d="M353.2 326.8 L357.2 336.9 M363.6 326.8 L359.6 336.9" stroke="#fff" stroke-opacity="0.16" stroke-width="1.3" fill="none"/>
<path d="M357.5 328.6 L359.3 328.6 L359.4 334.4 L357.4 334.4 Z" fill="#151515"/>
<rect x="355.8" y="323.2" width="5.2" height="4.2" fill="#a8a8a8"/>
<ellipse cx="358.4" cy="319.2" rx="6.3" ry="1.9" fill="#a8a8a8"/>
<ellipse cx="358.4" cy="314.9" rx="5.6" ry="4.3" fill="#161616"/>
<ellipse cx="358.4" cy="320.0" rx="5.4" ry="6.9" fill="url(#mfg)"/>
<rect x="353.9" y="317.2" width="9" height="1.9" rx="0.7" fill="#333" opacity="0.42"/>
<ellipse cx="356.3" cy="318.1" rx="1.25" ry="0.75" fill="#2a2a2a" opacity="0.78"/><ellipse cx="360.5" cy="318.1" rx="1.25" ry="0.75" fill="#2a2a2a" opacity="0.78"/>
<rect x="357.9" y="318.8" width="1.2" height="2.6" fill="#9a9a9a" opacity="0.7"/>
<rect x="356.5" y="322.5" width="3.8" height="0.9" fill="#5e5e5e" opacity="0.8"/>
<path d="M272.6 350.0 L272.6 339.2 Q273.6 332.2 284.1 328.2 L295.1 328.2 Q305.6 332.2 306.6 339.2 L306.6 350.0 Z" fill="#262626"/>
<path d="M274.6 337.2 Q275.6 332.7 283.6 329.4" stroke="#fff" stroke-opacity="0.10" stroke-width="2" fill="none"/>
<path d="M304.6 337.2 Q303.6 332.7 295.6 329.4" stroke="#fff" stroke-opacity="0.10" stroke-width="2" fill="none"/>
<path d="M284.8 328.2 L289.6 340.2 L294.4 328.2 Z" fill="#000" fill-opacity="0.35"/>
<path d="M285.1 327.0 L294.1 327.0 L290.7 335.2 L288.5 335.2 Z" fill="#f0f0f0"/>
<path d="M284.4 327.6 L288.4 337.7 M294.8 327.6 L290.8 337.7" stroke="#fff" stroke-opacity="0.16" stroke-width="1.3" fill="none"/>
<path d="M288.7 329.4 L290.5 329.4 L290.6 335.2 L288.6 335.2 Z" fill="#151515"/>
<rect x="287.0" y="324.0" width="5.2" height="4.2" fill="#a8a8a8"/>
<ellipse cx="289.6" cy="320.0" rx="6.3" ry="1.9" fill="#a8a8a8"/>
<ellipse cx="289.6" cy="315.7" rx="5.6" ry="4.3" fill="#161616"/>
<ellipse cx="289.6" cy="320.8" rx="5.4" ry="6.9" fill="url(#mfg)"/>
<ellipse cx="287.5" cy="318.9" rx="1.25" ry="0.75" fill="#2a2a2a" opacity="0.78"/><ellipse cx="291.7" cy="318.9" rx="1.25" ry="0.75" fill="#2a2a2a" opacity="0.78"/>
<rect x="289.1" y="319.6" width="1.2" height="2.6" fill="#9a9a9a" opacity="0.7"/>
<rect x="287.7" y="323.3" width="3.8" height="0.9" fill="#5e5e5e" opacity="0.8"/>
<path d="M307.9 351.0 L307.9 340.2 Q308.9 333.2 319.4 329.2 L330.4 329.2 Q340.9 333.2 341.9 340.2 L341.9 351.0 Z" fill="#2a2a2a"/>
<path d="M309.9 338.2 Q310.9 333.7 318.9 330.4" stroke="#fff" stroke-opacity="0.10" stroke-width="2" fill="none"/>
<path d="M339.9 338.2 Q338.9 333.7 330.9 330.4" stroke="#fff" stroke-opacity="0.10" stroke-width="2" fill="none"/>
<path d="M320.1 329.2 L324.9 341.2 L329.7 329.2 Z" fill="#000" fill-opacity="0.35"/>
<path d="M320.4 328.0 L329.4 328.0 L326.0 336.2 L323.8 336.2 Z" fill="#f0f0f0"/>
<path d="M319.7 328.6 L323.7 338.7 M330.1 328.6 L326.1 338.7" stroke="#fff" stroke-opacity="0.16" stroke-width="1.3" fill="none"/>
<path d="M324.0 330.4 L325.8 330.4 L325.9 336.2 L323.9 336.2 Z" fill="#151515"/>
<rect x="322.3" y="325.0" width="5.2" height="4.2" fill="#a8a8a8"/>
<ellipse cx="324.9" cy="321.0" rx="6.3" ry="1.9" fill="#a8a8a8"/>
<ellipse cx="324.9" cy="316.7" rx="5.6" ry="4.3" fill="#161616"/>
<ellipse cx="324.9" cy="321.8" rx="5.4" ry="6.9" fill="url(#mfg)"/>
<ellipse cx="322.8" cy="319.9" rx="1.25" ry="0.75" fill="#2a2a2a" opacity="0.78"/><ellipse cx="327.0" cy="319.9" rx="1.25" ry="0.75" fill="#2a2a2a" opacity="0.78"/>
<rect x="324.4" y="320.6" width="1.2" height="2.6" fill="#9a9a9a" opacity="0.7"/>
<rect x="323.0" y="324.3" width="3.8" height="0.9" fill="#5e5e5e" opacity="0.8"/>
<path d="M379.2 363.2 L379.2 352.4 Q380.2 345.4 390.7 341.4 L401.7 341.4 Q412.2 345.4 413.2 352.4 L413.2 363.2 Z" fill="#222"/>
<path d="M381.2 350.4 Q382.2 345.9 390.2 342.6" stroke="#fff" stroke-opacity="0.10" stroke-width="2" fill="none"/>
<path d="M411.2 350.4 Q410.2 345.9 402.2 342.6" stroke="#fff" stroke-opacity="0.10" stroke-width="2" fill="none"/>
<path d="M391.4 341.4 L396.2 351.4 L401.0 341.4 Z" fill="#000" fill-opacity="0.35"/>
<path d="M391.7 340.2 L400.7 340.2 L397.3 346.4 L395.1 346.4 Z" fill="#f0f0f0"/>
<path d="M391.0 340.8 L395.0 348.9 M401.4 340.8 L397.4 348.9" stroke="#fff" stroke-opacity="0.16" stroke-width="1.3" fill="none"/>
<path d="M395.3 342.6 L397.1 342.6 L397.2 346.4 L395.2 346.4 Z" fill="#151515"/>
<rect x="393.6" y="337.2" width="5.2" height="4.2" fill="#a8a8a8"/>
<ellipse cx="396.2" cy="333.2" rx="6.3" ry="1.9" fill="#a8a8a8"/>
<ellipse cx="396.2" cy="328.9" rx="5.6" ry="4.3" fill="#2a2a2a"/>
<ellipse cx="396.2" cy="334.0" rx="5.4" ry="6.9" fill="url(#mfg)"/>
<ellipse cx="394.1" cy="332.1" rx="1.25" ry="0.75" fill="#2a2a2a" opacity="0.78"/><ellipse cx="398.3" cy="332.1" rx="1.25" ry="0.75" fill="#2a2a2a" opacity="0.78"/>
<rect x="395.7" y="332.8" width="1.2" height="2.6" fill="#9a9a9a" opacity="0.7"/>
<rect x="394.3" y="336.5" width="3.8" height="0.9" fill="#5e5e5e" opacity="0.8"/>
<path d="M327.5 363.6 L327.5 352.8 Q328.5 345.8 339.0 341.8 L350.0 341.8 Q360.5 345.8 361.5 352.8 L361.5 363.6 Z" fill="#222"/>
<path d="M329.5 350.8 Q330.5 346.3 338.5 343.0" stroke="#fff" stroke-opacity="0.10" stroke-width="2" fill="none"/>
<path d="M359.5 350.8 Q358.5 346.3 350.5 343.0" stroke="#fff" stroke-opacity="0.10" stroke-width="2" fill="none"/>
<path d="M339.7 341.8 L344.5 351.8 L349.3 341.8 Z" fill="#000" fill-opacity="0.35"/>
<path d="M340.0 340.6 L349.0 340.6 L345.6 346.8 L343.4 346.8 Z" fill="#f0f0f0"/>
<path d="M339.3 341.2 L343.3 349.3 M349.7 341.2 L345.7 349.3" stroke="#fff" stroke-opacity="0.16" stroke-width="1.3" fill="none"/>
<path d="M343.6 343.0 L345.4 343.0 L345.5 346.8 L343.5 346.8 Z" fill="#151515"/>
<rect x="341.9" y="337.6" width="5.2" height="4.2" fill="#a8a8a8"/>
<ellipse cx="344.5" cy="333.6" rx="6.3" ry="1.9" fill="#a8a8a8"/>
<ellipse cx="344.5" cy="329.3" rx="5.6" ry="4.3" fill="#1a1a1a"/>
<ellipse cx="344.5" cy="334.4" rx="5.4" ry="6.9" fill="url(#mfg)"/>
<ellipse cx="342.4" cy="332.5" rx="1.25" ry="0.75" fill="#2a2a2a" opacity="0.78"/><ellipse cx="346.6" cy="332.5" rx="1.25" ry="0.75" fill="#2a2a2a" opacity="0.78"/>
<rect x="344.0" y="333.2" width="1.2" height="2.6" fill="#9a9a9a" opacity="0.7"/>
<rect x="342.6" y="336.9" width="3.8" height="0.9" fill="#5e5e5e" opacity="0.8"/>
<rect x="384" y="296" width="36" height="44" fill="#181818"/>
<ellipse cx="187.5" cy="317.5" rx="3.8" ry="2.4" fill="#d2d2d2"/>
<ellipse cx="201.5" cy="317.5" rx="3.8" ry="2.4" fill="#d2d2d2"/>
<ellipse cx="226" cy="318.5" rx="3.8" ry="2.4" fill="#d2d2d2"/>
<ellipse cx="235" cy="318.5" rx="3.8" ry="2.4" fill="#d2d2d2"/>
<ellipse cx="263.5" cy="320" rx="3.8" ry="2.4" fill="#d2d2d2"/>
<ellipse cx="302" cy="316" rx="3.8" ry="2.4" fill="#d2d2d2"/>
<ellipse cx="342" cy="318" rx="3.8" ry="2.4" fill="#d2d2d2"/>
<ellipse cx="372" cy="314" rx="3.8" ry="2.4" fill="#d2d2d2"/>
<rect x="378" y="296.5" width="5" height="1.6" fill="#e8e8e8"/><rect x="305" y="233" width="4" height="1.2" fill="#bbb"/><rect x="411" y="249" width="4" height="1.2" fill="#aaa"/>
<path d="M341.4 349.2 L341.4 338.4 Q342.4 331.4 352.9 327.4 L363.9 327.4 Q374.4 331.4 375.4 338.4 L375.4 349.2 Z" fill="#2c2c2c"/>
<path d="M343.4 336.4 Q344.4 331.9 352.4 328.6" stroke="#fff" stroke-opacity="0.10" stroke-width="2" fill="none"/>
<path d="M373.4 336.4 Q372.4 331.9 364.4 328.6" stroke="#fff" stroke-opacity="0.10" stroke-width="2" fill="none"/>
<path d="M353.6 327.4 L358.4 339.4 L363.2 327.4 Z" fill="#000" fill-opacity="0.35"/>
<path d="M353.9 326.2 L362.9 326.2 L359.5 334.4 L357.3 334.4 Z" fill="#f0f0f0"/>
<path d="M353.2 326.8 L357.2 336.9 M363.6 326.8 L359.6 336.9" stroke="#fff" stroke-opacity="0.16" stroke-width="1.3" fill="none"/>
<path d="M357.5 328.6 L359.3 328.6 L359.4 334.4 L357.4 334.4 Z" fill="#151515"/>
<rect x="355.8" y="323.2" width="5.2" height="4.2" fill="#a8a8a8"/>
<ellipse cx="358.4" cy="319.2" rx="6.3" ry="1.9" fill="#a8a8a8"/>
<ellipse cx="358.4" cy="314.9" rx="5.6" ry="4.3" fill="#161616"/>
<ellipse cx="358.4" cy="320.0" rx="5.4" ry="6.9" fill="url(#mfg)"/>
<rect x="353.9" y="317.2" width="9" height="1.9" rx="0.7" fill="#333" opacity="0.42"/>
<ellipse cx="356.3" cy="318.1" rx="1.25" ry="0.75" fill="#2a2a2a" opacity="0.78"/><ellipse cx="360.5" cy="318.1" rx="1.25" ry="0.75" fill="#2a2a2a" opacity="0.78"/>
<rect x="357.9" y="318.8" width="1.2" height="2.6" fill="#9a9a9a" opacity="0.7"/>
<rect x="356.5" y="322.5" width="3.8" height="0.9" fill="#5e5e5e" opacity="0.8"/>
<path d="M272.6 350.0 L272.6 339.2 Q273.6 332.2 284.1 328.2 L295.1 328.2 Q305.6 332.2 306.6 339.2 L306.6 350.0 Z" fill="#262626"/>
<path d="M274.6 337.2 Q275.6 332.7 283.6 329.4" stroke="#fff" stroke-opacity="0.10" stroke-width="2" fill="none"/>
<path d="M304.6 337.2 Q303.6 332.7 295.6 329.4" stroke="#fff" stroke-opacity="0.10" stroke-width="2" fill="none"/>
<path d="M284.8 328.2 L289.6 340.2 L294.4 328.2 Z" fill="#000" fill-opacity="0.35"/>
<path d="M285.1 327.0 L294.1 327.0 L290.7 335.2 L288.5 335.2 Z" fill="#f0f0f0"/>
<path d="M284.4 327.6 L288.4 337.7 M294.8 327.6 L290.8 337.7" stroke="#fff" stroke-opacity="0.16" stroke-width="1.3" fill="none"/>
<path d="M288.7 329.4 L290.5 329.4 L290.6 335.2 L288.6 335.2 Z" fill="#151515"/>
<rect x="287.0" y="324.0" width="5.2" height="4.2" fill="#a8a8a8"/>
<ellipse cx="289.6" cy="320.0" rx="6.3" ry="1.9" fill="#a8a8a8"/>
<ellipse cx="289.6" cy="315.7" rx="5.6" ry="4.3" fill="#161616"/>
<ellipse cx="289.6" cy="320.8" rx="5.4" ry="6.9" fill="url(#mfg)"/>
<ellipse cx="287.5" cy="318.9" rx="1.25" ry="0.75" fill="#2a2a2a" opacity="0.78"/><ellipse cx="291.7" cy="318.9" rx="1.25" ry="0.75" fill="#2a2a2a" opacity="0.78"/>
<rect x="289.1" y="319.6" width="1.2" height="2.6" fill="#9a9a9a" opacity="0.7"/>
<rect x="287.7" y="323.3" width="3.8" height="0.9" fill="#5e5e5e" opacity="0.8"/>
<path d="M307.9 351.0 L307.9 340.2 Q308.9 333.2 319.4 329.2 L330.4 329.2 Q340.9 333.2 341.9 340.2 L341.9 351.0 Z" fill="#2a2a2a"/>
<path d="M309.9 338.2 Q310.9 333.7 318.9 330.4" stroke="#fff" stroke-opacity="0.10" stroke-width="2" fill="none"/>
<path d="M339.9 338.2 Q338.9 333.7 330.9 330.4" stroke="#fff" stroke-opacity="0.10" stroke-width="2" fill="none"/>
<path d="M320.1 329.2 L324.9 341.2 L329.7 329.2 Z" fill="#000" fill-opacity="0.35"/>
<path d="M320.4 328.0 L329.4 328.0 L326.0 336.2 L323.8 336.2 Z" fill="#f0f0f0"/>
<path d="M319.7 328.6 L323.7 338.7 M330.1 328.6 L326.1 338.7" stroke="#fff" stroke-opacity="0.16" stroke-width="1.3" fill="none"/>
<path d="M324.0 330.4 L325.8 330.4 L325.9 336.2 L323.9 336.2 Z" fill="#151515"/>
<rect x="322.3" y="325.0" width="5.2" height="4.2" fill="#a8a8a8"/>
<ellipse cx="324.9" cy="321.0" rx="6.3" ry="1.9" fill="#a8a8a8"/>
<ellipse cx="324.9" cy="316.7" rx="5.6" ry="4.3" fill="#161616"/>
<ellipse cx="324.9" cy="321.8" rx="5.4" ry="6.9" fill="url(#mfg)"/>
<ellipse cx="322.8" cy="319.9" rx="1.25" ry="0.75" fill="#2a2a2a" opacity="0.78"/><ellipse cx="327.0" cy="319.9" rx="1.25" ry="0.75" fill="#2a2a2a" opacity="0.78"/>
<rect x="324.4" y="320.6" width="1.2" height="2.6" fill="#9a9a9a" opacity="0.7"/>
<rect x="323.0" y="324.3" width="3.8" height="0.9" fill="#5e5e5e" opacity="0.8"/>
<path d="M379.2 363.2 L379.2 352.4 Q380.2 345.4 390.7 341.4 L401.7 341.4 Q412.2 345.4 413.2 352.4 L413.2 363.2 Z" fill="#222"/>
<path d="M381.2 350.4 Q382.2 345.9 390.2 342.6" stroke="#fff" stroke-opacity="0.10" stroke-width="2" fill="none"/>
<path d="M411.2 350.4 Q410.2 345.9 402.2 342.6" stroke="#fff" stroke-opacity="0.10" stroke-width="2" fill="none"/>
<path d="M391.4 341.4 L396.2 351.4 L401.0 341.4 Z" fill="#000" fill-opacity="0.35"/>
<path d="M391.7 340.2 L400.7 340.2 L397.3 346.4 L395.1 346.4 Z" fill="#f0f0f0"/>
<path d="M391.0 340.8 L395.0 348.9 M401.4 340.8 L397.4 348.9" stroke="#fff" stroke-opacity="0.16" stroke-width="1.3" fill="none"/>
<path d="M395.3 342.6 L397.1 342.6 L397.2 346.4 L395.2 346.4 Z" fill="#151515"/>
<rect x="393.6" y="337.2" width="5.2" height="4.2" fill="#a8a8a8"/>
<ellipse cx="396.2" cy="333.2" rx="6.3" ry="1.9" fill="#a8a8a8"/>
<ellipse cx="396.2" cy="328.9" rx="5.6" ry="4.3" fill="#2a2a2a"/>
<ellipse cx="396.2" cy="334.0" rx="5.4" ry="6.9" fill="url(#mfg)"/>
<ellipse cx="394.1" cy="332.1" rx="1.25" ry="0.75" fill="#2a2a2a" opacity="0.78"/><ellipse cx="398.3" cy="332.1" rx="1.25" ry="0.75" fill="#2a2a2a" opacity="0.78"/>
<rect x="395.7" y="332.8" width="1.2" height="2.6" fill="#9a9a9a" opacity="0.7"/>
<rect x="394.3" y="336.5" width="3.8" height="0.9" fill="#5e5e5e" opacity="0.8"/>
<path d="M327.5 363.6 L327.5 352.8 Q328.5 345.8 339.0 341.8 L350.0 341.8 Q360.5 345.8 361.5 352.8 L361.5 363.6 Z" fill="#222"/>
<path d="M329.5 350.8 Q330.5 346.3 338.5 343.0" stroke="#fff" stroke-opacity="0.10" stroke-width="2" fill="none"/>
<path d="M359.5 350.8 Q358.5 346.3 350.5 343.0" stroke="#fff" stroke-opacity="0.10" stroke-width="2" fill="none"/>
<path d="M339.7 341.8 L344.5 351.8 L349.3 341.8 Z" fill="#000" fill-opacity="0.35"/>
<path d="M340.0 340.6 L349.0 340.6 L345.6 346.8 L343.4 346.8 Z" fill="#f0f0f0"/>
<path d="M339.3 341.2 L343.3 349.3 M349.7 341.2 L345.7 349.3" stroke="#fff" stroke-opacity="0.16" stroke-width="1.3" fill="none"/>
<path d="M343.6 343.0 L345.4 343.0 L345.5 346.8 L343.5 346.8 Z" fill="#151515"/>
<rect x="341.9" y="337.6" width="5.2" height="4.2" fill="#a8a8a8"/>
<ellipse cx="344.5" cy="333.6" rx="6.3" ry="1.9" fill="#a8a8a8"/>
<ellipse cx="344.5" cy="329.3" rx="5.6" ry="4.3" fill="#1a1a1a"/>
<ellipse cx="344.5" cy="334.4" rx="5.4" ry="6.9" fill="url(#mfg)"/>
<ellipse cx="342.4" cy="332.5" rx="1.25" ry="0.75" fill="#2a2a2a" opacity="0.78"/><ellipse cx="346.6" cy="332.5" rx="1.25" ry="0.75" fill="#2a2a2a" opacity="0.78"/>
<rect x="344.0" y="333.2" width="1.2" height="2.6" fill="#9a9a9a" opacity="0.7"/>
<rect x="342.6" y="336.9" width="3.8" height="0.9" fill="#5e5e5e" opacity="0.8"/>
</g>
<g fill="none" stroke="#e0442a" stroke-linecap="round"><circle cx="373.2" cy="248.5" r="16" stroke-width="2"/><path d="M386.5 258 L406.5 269.2" stroke-width="1.9"/><path d="M384 256.4 L390.6 257.2 L387.6 262 Z" fill="#e0442a" stroke-width="0.6"/></g>
</svg></div>
<div class="a kai" style="left:182.5px;top:34px;font-size:12px;letter-spacing:19.7px;font-weight:600;line-height:18px;white-space:nowrap">所处背景环境</div>
<div class="bl kai" style="top:62.4px">鲁斯没办法住校，进校就要遭受异样的待遇。</div>
<div class="dot" style="top:67.0px"></div>
<div class="bl kai" style="top:79.1px">哈佛法学院发的教科书上还赫然写着：<span class="q" style="text-align:right;padding-right:2.5px">“</span>土地，和</div>
<div class="dot" style="top:83.7px"></div>
<div class="bl kai" style="top:95.8px">女人一样，是用来占有的！<span class="q" style="text-align:left">”</span></div>
<div class="bl kai" style="top:112.5px">教授们总是有意无意地忽略女学生的存在，上课从</div>
<div class="dot" style="top:117.1px"></div>
<div class="bl kai" style="top:129.2px">不点名女学生，也不关心女生们到底学得如何。</div>
<div class="bl kai" style="top:145.9px">因为是女人，所以不能进入图书馆，被保安拒之门</div>
<div class="dot" style="top:150.5px"></div>
<div class="bl kai" style="top:162.6px">外</div>
<div class="bl kai" style="top:179.3px">美国法律存在了几百年的痼疾——看似保护女性，</div>
<div class="dot" style="top:183.9px"></div>
<div class="bl kai" style="top:196.0px">实则是歧视，比如丈夫是家庭的主人，由他选择家</div>
<div class="bl kai" style="top:212.7px">庭的住处，女性必须无条件服从他；比如大部分州</div>
<div class="bl kai" style="top:229.4px">的雇主可以以怀孕为由，合法地解雇孕妇；甚至有</div>
<div class="bl kai" style="top:246.1px">十二个州的法律规定，丈夫不可因强奸妻子而被起</div>
<div class="bl kai" style="top:262.8px">诉<span style="letter-spacing:3.15px">.......</span></div></div>

<div class="a" style="left:653px;top:341.5px;width:0.9px;height:7.5px;background:#777"></div><div class="a" style="left:652px;top:341.2px;width:3px;height:0.8px;background:#777"></div><div class="a" style="left:652px;top:348.6px;width:3px;height:0.8px;background:#777"></div>
<!-- right sidebar & scroll -->
<div class="a" style="left:767.8px;top:94px;width:6.8px;height:331px;background:#e1e1e1"></div>
<div class="a" style="left:779.8px;top:94px;width:18.2px;height:323.5px;background:#f3f3f3"></div><div class="a" style="left:779.8px;top:417.5px;width:18.2px;height:23px;background:#ececec"></div>
<div class="a" style="left:768.5px;top:175px;width:6px;height:23px;border-radius:3px;background:#fcfcfc;border:0.5px solid #d0d0d0"></div>
<svg class="a" style="left:781px;top:92px" width="14" height="92" viewBox="0 0 14 92" fill="none" stroke="#666" stroke-width="0.8">
<path d="M3.5 7.3 H10 M3.5 9.3 H10" stroke="#bbb"/>
<path d="M3 22 H10 M3 25 H10 M3 28 H10"/><circle cx="8" cy="22" r="1" fill="#f3f3f3"/><circle cx="5" cy="25" r="1" fill="#f3f3f3"/><circle cx="8" cy="28" r="1" fill="#f3f3f3"/>
<path d="M6.5 39.5 l1.2 2.5 l2.7 0.4 l-2 1.9 l0.5 2.7 l-2.4 -1.3 l-2.4 1.3 l0.5 -2.7 l-2 -1.9 l2.7 -0.4 z"/>
<rect x="3" y="58" width="5" height="5" rx="0.8"/><rect x="5.3" y="60.3" width="5" height="5" rx="0.8" fill="#f3f3f3"/>
</svg>
<div class="t" style="left:783.5px;top:166.5px;font-family:'Liberation Serif',serif;font-size:9px;color:#555">T</div>
<svg class="a" style="left:766.4px;top:389.6px" width="10" height="30" viewBox="0 0 10 30" fill="#777"><path d="M3.6 3 l1.2 1.6 l1.2 -1.6 z M3.6 10.5 l1.2 -1.4 l1.2 1.4 z M3.6 12.5 l1.2 1.4 l1.2 -1.4 z M3.6 19.5 l1.2 1.4 l1.2 -1.4 z M3.6 22 l1.2 1.4 l1.2 -1.4 z"/></svg>

<!-- ===== notes bar ===== -->
<div class="a" style="left:137.5px;top:425px;width:643px;height:16px;background:#ededed"></div>
<svg class="a" style="left:140px;top:428px" width="9" height="9" viewBox="0 0 9 9" fill="none" stroke="#555" stroke-width="0.7"><path d="M1 1.2 h7 v5 h-3.6 l-1.6 1.6 v-1.6 h-1.8 z"/><path d="M2.6 3 h3.8 M2.6 4.5 h2.6"/></svg>
<div class="t" style="left:151.5px;top:427.5px;color:#444;font-size:6.9px">单击此处添加备注</div>
<div class="pd" style="left:339px;background:#fff"></div><div class="pd" style="left:357.7px"></div><div class="pd" style="left:376.3px"></div><div class="pd" style="left:395px"></div><div class="pd" style="left:413.8px"></div><div class="pd" style="left:432.6px"></div><div class="pd" style="left:451.3px"></div>
<svg class="a" style="left:782.3px;top:424.6px" width="11" height="11" viewBox="0 0 11 11" fill="none" stroke="#555" stroke-width="0.8"><rect x="1" y="1" width="3.6" height="3.4" rx="1.4"/><rect x="6" y="1" width="3.6" height="3.4" rx="1.4"/><rect x="1" y="5.8" width="3.6" height="3.4" rx="1.4"/><rect x="6" y="5.8" width="3.6" height="3.4" rx="1.4"/></svg>

<!-- ===== status bar ===== -->
<div class="a" style="left:1px;top:440px;width:797px;height:17px;background:#f1f1f1"></div>
<div class="a" style="left:1px;top:439.6px;width:797px;height:0.8px;background:#e2e2e2"></div>
<div class="t" style="left:5px;top:443px;color:#555">幻灯片 6 / 20</div>
<div class="t" style="left:54px;top:443px;color:#555">1_Office 主题</div>
<svg class="a" style="left:103px;top:444px" width="9" height="9" viewBox="0 0 9 9" fill="none" stroke="#555" stroke-width="0.8"><path d="M1 2 H6 M3.5 2 V8 M5.8 4.5 H8.4 M7.1 4.5 V8"/></svg>
<div class="t" style="left:112.5px;top:443px;color:#555">缺失字体</div>
<div class="a" style="left:48.5px;top:443px;width:1px;height:11px;background:#e4e4e4"></div>
<div class="a" style="left:97.5px;top:443px;width:1px;height:11px;background:#e4e4e4"></div>
<!-- right status icons -->
<svg class="a" style="left:566px;top:442px" width="60" height="13" viewBox="0 0 60 13" fill="none" stroke="#555" stroke-width="0.8">
<path d="M2.5 4 H9.5 M2.5 6 H9.5 M2.5 8 H6" /><path d="M8 8 l1.2 1.4 l1.2 -1.4 z" fill="#555" stroke="none"/><path d="M12.2 7 l0.8 1 l0.8 -1 z" fill="#888" stroke="none"/>
<rect x="18" y="1.5" width="10.5" height="10" fill="#dcdcdc" stroke="#8a8a8a" stroke-width="0.7"/><rect x="20" y="3.6" width="6.6" height="5.8"/><path d="M22 3.6 V9.4"/>
<rect x="33.3" y="3.6" width="2.6" height="2.4" rx="0.7"/><rect x="37.3" y="3.6" width="2.6" height="2.4" rx="0.7"/><rect x="33.3" y="7.2" width="2.6" height="2.4" rx="0.7"/><rect x="37.3" y="7.2" width="2.6" height="2.4" rx="0.7"/>
<path d="M47 3.6 h3 v6 h-3 z M50 3.6 h3 v6 h-3 z"/>
</svg>
<div class="a" style="left:629px;top:441.8px;width:16px;height:12.6px;border-radius:1.5px;background:#ee6e46"></div>
<svg class="a" style="left:633.5px;top:444.5px" width="8" height="8" viewBox="0 0 8 8"><path d="M1.5 0.8 L6.5 3.8 L1.5 6.8 Z" fill="#fff"/></svg>
<svg class="a" style="left:647px;top:445px" width="150" height="8" viewBox="0 0 150 8"><path d="M1.6 3 l1 1.2 l1 -1.2 z M27 3 l1 1.2 l1 -1.2 z" fill="#888"/><path d="M35.5 3.8 H40.5" stroke="#444" stroke-width="1"/><path d="M46 3.8 H118" stroke="#c4c4c4" stroke-width="0.8"/><circle cx="75" cy="3.8" r="2.6" fill="#fff" stroke="#555" stroke-width="0.8"/><path d="M123.5 3.8 H129 M126.2 1 V6.6" stroke="#444" stroke-width="1"/><path d="M137.5 2.3 v-1.3 h1.3 M142 1 h1.3 v1.3 M143.3 5.3 v1.3 h-1.3 M138.8 6.6 h-1.3 v-1.3" fill="none" stroke="#555" stroke-width="0.7"/><circle cx="140.4" cy="3.8" r="0.9" fill="#666"/></svg>
<div class="t" style="left:657.5px;top:443px;color:#555;font-size:6.3px">83%</div>

<!-- ===== video overlay ===== -->
<div class="a" style="left:666.4px;top:48.9px;width:113.6px;height:112.5px;background:#404040;overflow:hidden">
<div class="a" style="left:21.5px;top:21.2px;width:72px;height:72px;border-radius:50%;background:linear-gradient(#f6f8fa,#e6edf1 45%,#cfdbe1 75%,#b4c2c9);overflow:hidden;box-shadow:0 0 0 0.6px #5a5f62">
<div class="a" style="left:12px;top:9.5px;width:11px;height:11px;border-radius:50%;background:#ccd8df"></div>
<svg class="a" style="left:0;top:0" width="72" height="72" viewBox="0 0 72 72"><path d="M0 52 L24 27 L33 36 L47 18.5 L72 44 L72 72 L0 72 Z" fill="#cdd9e0"/><path d="M0 52 L24 27 L33 36 L47 18.5 L72 44" fill="none" stroke="#dde7ec" stroke-width="0.9"/></svg>
</div>
<div class="a" style="left:0;top:58px;width:114px;height:54.5px;background:linear-gradient(rgba(18,18,18,0) 0%,rgba(18,18,18,0.12) 36%,rgba(18,18,18,0.52) 56%,rgba(18,18,18,0.82) 80%,rgba(18,18,18,0.94) 100%)"></div>
</div>
<div class="t" style="left:703.2px;top:121px;color:#587b95;font-size:6.3px;letter-spacing:0.05px">暂时无法查看</div>
<div class="a" style="left:674px;top:137.2px;width:9.3px;height:14.2px;border-radius:4.65px;background:#fff"></div>
<div class="a" style="left:675px;top:138.2px;width:7.3px;height:12.2px;border-radius:3.65px;background:linear-gradient(#fff 0%,#fff 32%,#5fe35a 36%,#3fd23c 100%)"></div>
<svg class="a" style="left:668.5px;top:140px" width="20" height="19" viewBox="0 0 20 19"><path d="M1.9 7.4 A8.1 8.1 0 0 0 18.1 7.4" fill="none" stroke="#fff" stroke-width="2.2"/><path d="M10 15 V17.6" stroke="#fff" stroke-width="2.2"/></svg>
<div class="t" style="left:689px;top:136px;color:#fff;font-size:16.1px;line-height:20px;height:20px">张玺琪</div>

<!-- ===== mic overlay ===== -->
<div class="a" style="left:675px;top:352px;width:64px;height:64px;border-radius:50%;background:rgba(62,66,70,0.62)"></div>
<svg class="a" style="left:675px;top:352px" width="64" height="64" viewBox="0 0 64 64"><rect x="25.4" y="14.6" width="13.2" height="24" rx="6.6" fill="#fff"/><path d="M20.8 31 a11.2 11.2 0 0 0 22.4 0" fill="none" stroke="#fff" stroke-width="2.3"/><path d="M32 42 V47.5 M24.2 48.4 H39.8" stroke="#fff" stroke-width="2.3"/><path d="M18.2 45.4 L46 17.8" stroke="#ee9483" stroke-width="2.3"/></svg>

</div></div>
</body>
</html>
